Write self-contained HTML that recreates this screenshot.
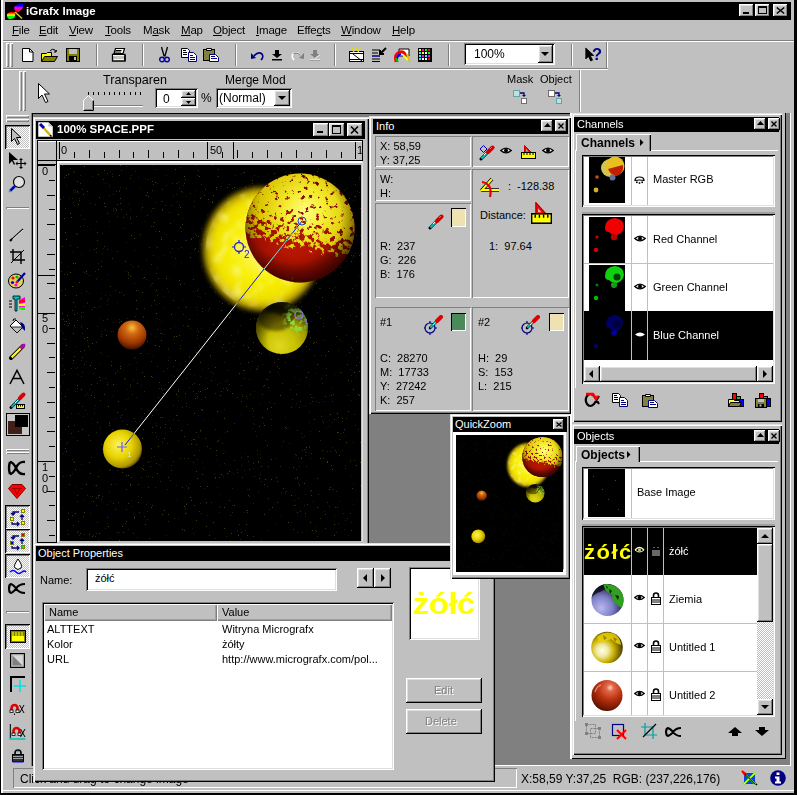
<!DOCTYPE html>
<html><head><meta charset="utf-8">
<style>
*{box-sizing:border-box;margin:0;padding:0}
html,body{width:797px;height:795px;overflow:hidden}
body{position:relative;background:#c0c0c0;font-family:"Liberation Sans",sans-serif;font-size:11px;color:#000}
.a{position:absolute}
.t{position:absolute;white-space:nowrap;line-height:1}
.btn{background:#c0c0c0;box-shadow:inset -1px -1px #000,inset 1px 1px #fff,inset -2px -2px #808080,inset 2px 2px #dfdfdf}
.sunk{box-shadow:inset 1px 1px #808080,inset -1px -1px #fff,inset 2px 2px #000,inset -2px -2px #dfdfdf}
.win{background:#c0c0c0;box-shadow:inset -1px -1px #000,inset 1px 1px #dfdfdf,inset -2px -2px #808080,inset 2px 2px #fff}
.tb{background:#000;color:#fff}
.cap{position:absolute;width:16px;height:14px;background:#c0c0c0;box-shadow:inset -1px -1px #000,inset 1px 1px #fff,inset -2px -2px #808080,inset 2px 2px #dfdfdf}
.etch{box-shadow:inset 1px 1px #808080,inset -1px -1px #fff}
.raise1{box-shadow:inset 1px 1px #fff,inset -1px -1px #808080}
.sep{position:absolute;width:2px;box-shadow:inset 1px 0 #808080,inset -1px 0 #fff}
.grip{position:absolute;width:3px;box-shadow:inset 1px 1px #fff,inset -1px -1px #808080}
svg{position:absolute;overflow:visible}
u{text-decoration:underline;text-underline-offset:1px}
</style></head><body>

<svg width="0" height="0" style="position:absolute">
<defs>
<symbol id="eye" viewBox="0 0 12 7"><path d="M0.8 3.5Q6 -1.2 11.2 3.5Q6 8.2 0.8 3.5z" fill="#f4f4d8" stroke="#000" stroke-width="1.3"/><circle cx="6" cy="3.5" r="2" fill="#000"/></symbol>
<symbol id="drop" viewBox="0 0 16 16"><path d="M2 14L10 6" stroke="#000" stroke-width="3" stroke-linecap="round"/><path d="M2.5 13.5L9.5 6.5" stroke="#00c0c0" stroke-width="2"/><path d="M5 10L8 7" stroke="#fff" stroke-width="1"/><path d="M9 7L13.5 2.5" stroke="#d00000" stroke-width="4" stroke-linecap="round"/><path d="M11 4L13 2" stroke="#ff6060" stroke-width="1"/></symbol>
<symbol id="ruler" viewBox="0 0 15 14"><path d="M3.5 0.5L3.5 7.5L10.5 7.5z" fill="#ff0000" stroke="#c00000"/><path d="M5 4L5 6.5L7.5 6.5z" fill="#c0c0c0"/><rect x="0.5" y="7.5" width="14" height="6" fill="#ffff00" stroke="#000"/><path d="M3 8v2M6 8v2M9 8v2M12 8v2" stroke="#000"/></symbol>
<symbol id="tgt" viewBox="0 0 20 20"><circle cx="6" cy="13" r="5" fill="none" stroke="#000080" stroke-width="1.2"/><path d="M6 6v2.5M6 17.5v2.5M-1 13h2.5M10.5 13h2.5" stroke="#000080" stroke-width="1.2"/><path d="M6 13L14 5" stroke="#000" stroke-width="2.6" stroke-linecap="round"/><path d="M6.3 12.7L13.5 5.5" stroke="#00c8c8" stroke-width="1.8"/><path d="M9 10L12 7" stroke="#fff" stroke-width="0.8"/><path d="M13 6L17 2" stroke="#e00000" stroke-width="4" stroke-linecap="round"/></symbol>
<symbol id="lock" viewBox="0 0 10 13"><path d="M2.5 6V3.5a2.5 2.5 0 0 1 5 0V6" fill="none" stroke="#000" stroke-width="1.6"/><rect x="0.5" y="5.5" width="9" height="7" fill="#fff" stroke="#000"/><path d="M1 8h8M1 10h8" stroke="#000"/></symbol>
<symbol id="copy" viewBox="0 0 16 14"><path d="M0.5 0.5h6l2 2v7h-8z" fill="#fff" stroke="#000"/><path d="M2 2.5h3M2 4.5h4M2 6.5h4" stroke="#000"/><path d="M7.5 4.5h5l3 3v6h-8z" fill="#fff" stroke="#000080"/><path d="M9 7.5h3M9 9.5h5M9 11.5h5" stroke="#000080"/></symbol>
<symbol id="paste" viewBox="0 0 16 15"><rect x="0.5" y="2.5" width="11" height="11" fill="#808040" stroke="#000"/><path d="M3.5 3.5V1.5h5v2z" fill="#ffff80" stroke="#000"/><path d="M6.5 7.5h6l3 3v4h-9z" fill="#fff" stroke="#000080"/><path d="M8 9.5h4M8 11.5h6" stroke="#000080"/></symbol>
<symbol id="sph" viewBox="0 0 30 30"><circle cx="15" cy="15" r="14.5"/></symbol>
<radialGradient id="earth" cx="0.35" cy="0.7" r="0.8"><stop offset="0" stop-color="#b0b0f0"/><stop offset="0.5" stop-color="#7070b8"/><stop offset="1" stop-color="#202040"/></radialGradient>
<radialGradient id="unt1" cx="0.4" cy="0.55" r="0.7"><stop offset="0" stop-color="#f8f8f0"/><stop offset="0.45" stop-color="#e0d040"/><stop offset="0.8" stop-color="#a09000"/><stop offset="1" stop-color="#504000"/></radialGradient>
<radialGradient id="unt2" cx="0.4" cy="0.35" r="0.75"><stop offset="0" stop-color="#ffc0a0"/><stop offset="0.3" stop-color="#e06040"/><stop offset="0.75" stop-color="#a02810"/><stop offset="1" stop-color="#501000"/></radialGradient>
</defs></svg>
<!-- main frame -->
<div class="a" style="left:0;top:0;width:1px;height:795px;background:#000"></div>
<div class="a" style="left:1px;top:0;width:2px;height:795px;background:#fff"></div>
<div class="a" style="left:794px;top:0;width:3px;height:795px;background:#000"></div>

<!-- title bar -->
<div class="a tb" style="left:5px;top:2px;width:786px;height:18px"></div>
<svg style="left:5px;top:2px" width="20" height="18" viewBox="0 0 20 18"><defs><linearGradient id="lg1" x1="0" y1="0" x2="0" y2="1"><stop offset="0.1" stop-color="#ff0000"/><stop offset="0.45" stop-color="#ffff00"/><stop offset="0.65" stop-color="#00ff00"/></linearGradient><linearGradient id="lg2" x1="0" y1="0" x2="0" y2="1"><stop offset="0.25" stop-color="#0000ff"/><stop offset="0.5" stop-color="#ff00ff"/><stop offset="0.9" stop-color="#ff0000"/></linearGradient></defs><path d="M9 5Q12 1 18 1.5Q19 6 15 9Q13 11 11.5 10Q9 8 9 5z" fill="url(#lg2)"/><path d="M2 12Q5 9 9.5 10Q11 12 10 15Q8 17.5 4 17Q1.5 16 2 12z" fill="url(#lg1)"/><path d="M10 10L17 16.5" stroke="#e0d000" stroke-width="1.4"/></svg>
<div class="t" style="left:26px;top:6px;color:#fff;font-weight:bold;font-size:11.5px">iGrafx Image</div>
<div class="cap" style="left:739px;top:4px;width:15px;height:13px"></div>
<div class="cap" style="left:755px;top:4px;width:15px;height:13px"></div>
<div class="cap" style="left:773px;top:4px;width:15px;height:13px"></div>
<div class="a" style="left:743px;top:12px;width:6px;height:2px;background:#000"></div>
<div class="a" style="left:758px;top:6px;width:9px;height:8px;border:1px solid #000;border-top-width:2px"></div>
<svg style="left:776px;top:7px" width="9" height="7" viewBox="0 0 9 7"><path d="M0.8 0.5L8.2 6.5M8.2 0.5L0.8 6.5" stroke="#000" stroke-width="1.6"/></svg>

<!-- menu -->
<div class="t" style="left:12px;top:25px;font-size:11.5px;letter-spacing:-0.2px"><u>F</u>ile</div>
<div class="t" style="left:39px;top:25px;font-size:11.5px;letter-spacing:-0.2px"><u>E</u>dit</div>
<div class="t" style="left:69px;top:25px;font-size:11.5px;letter-spacing:-0.2px"><u>V</u>iew</div>
<div class="t" style="left:105px;top:25px;font-size:11.5px;letter-spacing:-0.2px"><u>T</u>ools</div>
<div class="t" style="left:143px;top:25px;font-size:11.5px;letter-spacing:-0.2px">M<u>a</u>sk</div>
<div class="t" style="left:181px;top:25px;font-size:11.5px;letter-spacing:-0.2px"><u>M</u>ap</div>
<div class="t" style="left:213px;top:25px;font-size:11.5px;letter-spacing:-0.2px"><u>O</u>bject</div>
<div class="t" style="left:256px;top:25px;font-size:11.5px;letter-spacing:-0.2px"><u>I</u>mage</div>
<div class="t" style="left:297px;top:25px;font-size:11.5px;letter-spacing:-0.2px">Effe<u>c</u>ts</div>
<div class="t" style="left:341px;top:25px;font-size:11.5px;letter-spacing:-0.2px"><u>W</u>indow</div>
<div class="t" style="left:392px;top:25px;font-size:11.5px;letter-spacing:-0.2px"><u>H</u>elp</div>

<!-- rebar lines -->
<div class="a" style="left:3px;top:40px;width:791px;height:1px;background:#808080"></div>
<div class="a" style="left:3px;top:41px;width:791px;height:1px;background:#fff"></div>
<div class="a" style="left:3px;top:68px;width:605px;height:1px;background:#808080"></div>
<div class="a" style="left:3px;top:69px;width:605px;height:1px;background:#fff"></div>


<!-- ===== TOOLBAR 1 ===== -->
<div class="a" style="left:6px;top:43px;width:3px;height:24px;box-shadow:inset 1px 1px #fff,inset -1px -1px #808080"></div>
<div class="a" style="left:10px;top:43px;width:3px;height:24px;box-shadow:inset 1px 1px #fff,inset -1px -1px #808080"></div>
<div class="sep" style="left:96px;top:44px;height:22px"></div>
<div class="sep" style="left:142px;top:44px;height:22px"></div>
<div class="sep" style="left:235px;top:44px;height:22px"></div>
<div class="sep" style="left:334px;top:44px;height:22px"></div>
<div class="sep" style="left:448px;top:44px;height:22px"></div>
<div class="sep" style="left:571px;top:44px;height:22px"></div>
<div class="a" style="left:606px;top:42px;width:1px;height:26px;background:#808080"></div>
<div class="a" style="left:607px;top:42px;width:1px;height:26px;background:#fff"></div>
<!-- new -->
<svg style="left:22px;top:48px" width="12" height="14" viewBox="0 0 12 14"><path d="M0.5 0.5h7l3.5 3.5v9.5h-10.5z" fill="#fff" stroke="#000"/><path d="M7.5 0.5v3.5h3.5" fill="none" stroke="#000"/></svg>
<!-- open -->
<svg style="left:41px;top:48px" width="17" height="14" viewBox="0 0 17 14"><path d="M9 3Q11 0 14 2L15 4M15 4L13 4M15 4L15.5 2" fill="none" stroke="#000" stroke-width="1"/><path d="M0.5 5.5h5l1 -1h4v9h-10z" fill="#ffff00" stroke="#000"/><path d="M3.5 8.5h13l-3 5h-13z" fill="#808000" stroke="#000"/></svg>
<!-- save -->
<svg style="left:66px;top:48px" width="14" height="14" viewBox="0 0 14 14"><rect x="0.5" y="0.5" width="13" height="13" fill="#808000" stroke="#000"/><rect x="3" y="1" width="8" height="5" fill="#c0c0c0"/><rect x="3" y="8" width="8" height="5" fill="#000"/><rect x="8" y="9" width="2" height="3" fill="#c0c0c0"/></svg>
<!-- print -->
<svg style="left:111px;top:47px" width="16" height="15" viewBox="0 0 16 15"><path d="M4.5 1.5h9l-1.5 5h-9z" fill="#fff" stroke="#000" stroke-width="1.2"/><path d="M4.5 3.5h6M4 5h6" stroke="#000"/><path d="M1.5 7.5h12.5v6.5h-12.5z" fill="#c0c0c0" stroke="#000" stroke-width="1.3"/><path d="M2 8.6h11.5" stroke="#fff"/><path d="M6 10.5h4" stroke="#d0f000" stroke-width="1.2"/><path d="M2.5 12.6h10.5" stroke="#fff"/><path d="M14 8v6" stroke="#000" stroke-width="1.5"/></svg>
<!-- cut -->
<svg style="left:159px;top:47px" width="11" height="16" viewBox="0 0 11 16"><path d="M2.5 0L5.2 9.5M8.5 0L5.8 9.5" stroke="#000" stroke-width="1.3"/><circle cx="3" cy="12.5" r="2.3" fill="none" stroke="#0000a0" stroke-width="1.4"/><circle cx="8" cy="12.5" r="2.3" fill="none" stroke="#0000a0" stroke-width="1.4"/></svg>
<!-- copy -->
<svg style="left:181px;top:48px" width="16" height="14"><use href="#copy" width="16" height="14"/></svg>
<!-- paste -->
<svg style="left:203px;top:47px" width="16" height="15"><use href="#paste" width="16" height="15"/></svg>
<!-- undo -->
<svg style="left:251px;top:51px" width="14" height="10" viewBox="0 0 14 10"><path d="M3 5Q7 0 11 3Q13 6 10 9" fill="none" stroke="#000080" stroke-width="1.6"/><path d="M0 2L5 7L0 8z" fill="#000080"/></svg>
<svg style="left:272px;top:50px" width="10" height="10" viewBox="0 0 10 10"><path d="M3 0h4v4h3l-5 4l-5 -4h3z" fill="#000"/><rect x="0" y="9" width="10" height="1.5" fill="#000"/></svg>
<svg style="left:290px;top:51px" width="14" height="10" viewBox="0 0 14 10"><path d="M11 5Q7 0 3 3Q1 6 4 9" fill="none" stroke="#fff" stroke-width="1.6"/><path d="M10.5 4.5Q7 0.5 3.5 3" fill="none" stroke="#808080" stroke-width="1.2"/><path d="M14 2L9 7L14 8z" fill="#808080"/></svg>
<svg style="left:310px;top:50px" width="10" height="10" viewBox="0 0 10 10"><path d="M3 0h4v4h3l-5 4l-5 -4h3z" fill="#808080"/><rect x="0" y="9" width="10" height="1.5" fill="#808080"/><path d="M10 4.5L5 8.5M0 9.5h10" stroke="#fff" stroke-width="0.8"/></svg>
<!-- icons A-D -->
<svg style="left:349px;top:48px" width="16" height="14" viewBox="0 0 16 14"><rect x="0.5" y="3.5" width="14" height="10" fill="#fff" stroke="#000"/><path d="M0.5 5.5h14M0.5 11.5h14" stroke="#000"/><path d="M2 4v1M5 4v1M8 4v1M11 4v1M2 12v1M5 12v1M8 12v1M11 12v1" stroke="#fff"/><path d="M4 6L13 13" stroke="#000"/><path d="M3 0L5 4M11 0L9 4M7 0v3" stroke="#e0e000" stroke-width="1.5"/></svg>
<svg style="left:372px;top:48px" width="15" height="14" viewBox="0 0 15 14"><path d="M0 2h8M0 5h6M0 8h8M0 11h8M0 13.5h8" stroke="#000"/><path d="M0 8h8" stroke="#0000c0"/><path d="M14 0L8 6M8 2v4h4" fill="none" stroke="#000" stroke-width="2"/></svg>
<svg style="left:394px;top:48px" width="17" height="15" viewBox="0 0 17 15"><path d="M5 1h10v7h-10z" fill="#fff" stroke="#000"/><path d="M2 14Q0 6 6 4Q10 3 12 8" fill="none" stroke="#ff0000" stroke-width="3"/><path d="M3 12Q3 7 7 6" fill="none" stroke="#0000ff" stroke-width="2"/><path d="M9 7L14 12" stroke="#ffff00" stroke-width="2"/><path d="M13 6L16 14" stroke="#e0c000" stroke-width="2"/><path d="M2 10l2 4" stroke="#00c000" stroke-width="2"/></svg>
<svg style="left:418px;top:48px" width="14" height="14" viewBox="0 0 14 14"><rect width="14" height="14" fill="#000"/><rect x="1" y="1" width="2" height="2" fill="#ffff00"/><rect x="4" y="1" width="2" height="2" fill="#ff00ff"/><rect x="7" y="1" width="2" height="2" fill="#00ff00"/><rect x="10" y="1" width="2" height="2" fill="#ff0000"/><rect x="1" y="4" width="2" height="2" fill="#00ffff"/><rect x="4" y="4" width="2" height="2" fill="#ffff00"/><rect x="7" y="4" width="2" height="2" fill="#ffffff"/><rect x="10" y="4" width="2" height="2" fill="#00ff00"/><rect x="1" y="7" width="2" height="2" fill="#00ffff"/><rect x="4" y="7" width="2" height="2" fill="#ff00ff"/><rect x="7" y="7" width="2" height="2" fill="#00ffff"/><rect x="10" y="7" width="2" height="2" fill="#ff00ff"/><rect x="1" y="10" width="2" height="2" fill="#00ffff"/><rect x="4" y="10" width="2" height="2" fill="#ffffff"/><rect x="7" y="10" width="2" height="2" fill="#ffffff"/><rect x="10" y="10" width="2" height="2" fill="#ff0000"/></svg>
<!-- zoom combo -->
<div class="a" style="left:464px;top:43px;width:91px;height:22px;background:#fff;box-shadow:inset 1px 1px #808080,inset -1px -1px #fff,inset 2px 2px #000,inset -2px -2px #dfdfdf"></div>
<div class="btn a" style="left:538px;top:45px;width:15px;height:18px"></div>
<svg style="left:541px;top:52px" width="8" height="4"><path d="M0 0h8L4 4z" fill="#000"/></svg>
<div class="t" style="left:474px;top:48px;font-size:12px">100%</div>
<!-- help -->
<svg style="left:585px;top:47px" width="19" height="16" viewBox="0 0 19 16"><path d="M0.8 1v11l2.6 -2.6l2.4 4.6l1.8 -0.9l-2.4 -4.6h3.6z" fill="#000" stroke="#000" stroke-width="0.8"/><text x="7" y="12.8" font-family="Liberation Sans" font-weight="bold" font-size="16.5" fill="#000080">?</text></svg>

<!-- ===== TOOLBAR 2 ===== -->
<div class="a" style="left:19px;top:71px;width:3px;height:40px;box-shadow:inset 1px 1px #fff,inset -1px -1px #808080"></div>
<div class="a" style="left:23px;top:71px;width:3px;height:40px;box-shadow:inset 1px 1px #fff,inset -1px -1px #808080"></div>
<div class="a" style="left:579px;top:70px;width:1px;height:42px;background:#808080"></div>
<div class="a" style="left:580px;top:70px;width:1px;height:42px;background:#fff"></div>
<svg style="left:38px;top:83px" width="13" height="21" viewBox="0 0 13 21"><path d="M0.5 0.5v15l3.5 -3.5l3.5 7.5l2.5 -1l-3.5 -7.5h5z" fill="#fff" stroke="#000"/></svg>
<div class="t" style="left:103px;top:74px;font-size:12.6px">Transparen</div>
<div class="t" style="left:225px;top:74px;font-size:12px">Merge Mod</div>
<div class="a" style="left:88px;top:92px;width:53px;height:3px;background:repeating-linear-gradient(90deg,#000 0 1px,transparent 1px 5.2px)"></div>
<div class="a" style="left:88px;top:105px;width:55px;height:2px;box-shadow:inset 1px 1px #808080,inset -1px -1px #fff;background:#c0c0c0"></div>
<svg style="left:83px;top:95px" width="11" height="16" viewBox="0 0 11 16"><path d="M0.5 15.5V5.5L5.5 0.5L10.5 5.5V15.5z" fill="#c0c0c0" stroke="#fff"/><path d="M10.5 5.5V15.5H0.5" fill="none" stroke="#000"/><path d="M9.5 6V14.5H1.5" fill="none" stroke="#808080"/></svg>
<div class="a" style="left:155px;top:88px;width:43px;height:20px;background:#fff;box-shadow:inset 1px 1px #808080,inset -1px -1px #fff,inset 2px 2px #000,inset -2px -2px #dfdfdf"></div>
<div class="t" style="left:163px;top:93px;font-size:12px">0</div>
<div class="btn a" style="left:181px;top:90px;width:15px;height:8px"></div>
<div class="btn a" style="left:181px;top:98px;width:15px;height:8px"></div>
<svg style="left:186px;top:92px" width="5" height="3"><path d="M0 3h5L2.5 0z" fill="#000"/></svg>
<svg style="left:186px;top:101px" width="5" height="3"><path d="M0 0h5L2.5 3z" fill="#000"/></svg>
<div class="t" style="left:201px;top:92px;font-size:12px">%</div>
<div class="a" style="left:216px;top:88px;width:76px;height:20px;background:#fff;box-shadow:inset 1px 1px #808080,inset -1px -1px #fff,inset 2px 2px #000,inset -2px -2px #dfdfdf"></div>
<div class="btn a" style="left:274px;top:90px;width:16px;height:16px"></div>
<svg style="left:278px;top:96px" width="8" height="4"><path d="M0 0h8L4 4z" fill="#000"/></svg>
<div class="t" style="left:219px;top:92px;font-size:12px">(Normal)</div>
<div class="t" style="left:507px;top:74px;font-size:11px">Mask</div>
<div class="t" style="left:540px;top:74px;font-size:11px">Object</div>
<svg style="left:513px;top:90px" width="15" height="14" viewBox="0 0 15 14"><rect x="0.5" y="0.5" width="6" height="6" fill="#c0e0e0" stroke="#008080" stroke-dasharray="1 1"/><path d="M7 3h4v3" fill="none" stroke="#000080" stroke-width="1.3"/><path d="M9 5l2 2l2 -2z" fill="#000080"/><rect x="8.5" y="8.5" width="5" height="5" fill="#fff" stroke="#000" stroke-dasharray="1 1"/></svg>
<svg style="left:548px;top:90px" width="15" height="14" viewBox="0 0 15 14"><rect x="0.5" y="0.5" width="6" height="6" fill="#fff" stroke="#000" stroke-dasharray="1 1"/><path d="M7 3h4v3" fill="none" stroke="#000080" stroke-width="1.3"/><path d="M9 5l2 2l2 -2z" fill="#000080"/><rect x="8.5" y="8.5" width="5" height="5" fill="#c0e0e0" stroke="#008080" stroke-dasharray="1 1"/></svg>


<!-- ===== TOOL PALETTE ===== -->
<div class="a" style="left:4px;top:113px;width:28px;height:653px;background:#c0c0c0;box-shadow:inset -1px 0 #808080"></div>
<div class="a" style="left:6px;top:115px;width:23px;height:3px;box-shadow:inset 1px 1px #fff,inset -1px -1px #808080"></div>
<div class="a" style="left:6px;top:119px;width:23px;height:3px;box-shadow:inset 1px 1px #fff,inset -1px -1px #808080"></div>
<div class="a" style="left:5px;top:125px;width:25px;height:24px;background:repeating-conic-gradient(#fff 0 25%,#c0c0c0 0 50%) 0 0/2px 2px;box-shadow:inset 1px 1px #000,inset -1px -1px #fff,inset 2px 2px #808080"></div>
<svg style="left:11px;top:128px" width="13" height="18" viewBox="0 0 13 18"><path d="M0.5 0.5v13l3 -3l3 6l2 -1l-3 -6h4.5z" fill="#c0c0c0" stroke="#000"/></svg>
<svg style="left:9px;top:152px" width="17" height="17" viewBox="0 0 17 17"><path d="M0 0v12l3 -3l2 4l1 -1l-2 -4h5z" fill="#000"/><path d="M12 7v9M7.5 11.5h9" stroke="#000" stroke-width="1.2"/><path d="M12 6l-2 2h4zM12 17l-2 -2h4zM6.5 11.5l2 -2v4zM17.5 11.5l-2 -2v4z" fill="#000"/></svg>
<svg style="left:8px;top:175px" width="18" height="18" viewBox="0 0 18 18"><circle cx="11" cy="7" r="5.5" fill="#e0e0e0" stroke="#000" stroke-width="1.2"/><path d="M7 11L2 16" stroke="#0000c0" stroke-width="2.5"/><path d="M2.5 15.5L1 17" stroke="#00c0c0" stroke-width="2"/></svg>
<div class="a" style="left:6px;top:207px;width:23px;height:2px;box-shadow:inset 1px 1px #808080,inset -1px -1px #fff"></div>
<svg style="left:9px;top:226px" width="16" height="16" viewBox="0 0 16 16"><path d="M2 14L14 3" stroke="#000" stroke-width="1.2"/><path d="M3 14L14 4" stroke="#fff" stroke-width="0.8"/><path d="M1 15l2 -2" stroke="#000" stroke-width="2"/></svg>
<svg style="left:10px;top:249px" width="15" height="15" viewBox="0 0 15 15"><path d="M3 0v11h12M0 3h11v12" fill="none" stroke="#000" stroke-width="1.4"/><path d="M1 14L14 1" stroke="#000" stroke-width="1"/></svg>
<svg style="left:8px;top:272px" width="18" height="17" viewBox="0 0 18 17"><ellipse cx="8" cy="9" rx="7.5" ry="7" fill="#e0d060" stroke="#000"/><circle cx="5" cy="6" r="1.6" fill="#ff0000"/><circle cx="9" cy="5" r="1.6" fill="#00c000"/><circle cx="4.5" cy="10.5" r="1.6" fill="#0000ff"/><circle cx="8" cy="13" r="1.6" fill="#ff00ff"/><path d="M17 1L9 10" stroke="#0000a0" stroke-width="2.2"/><path d="M10 9L8 11" stroke="#ff0000" stroke-width="2"/></svg>
<svg style="left:9px;top:295px" width="17" height="17" viewBox="0 0 17 17"><path d="M4 1h7v3h-3v12h-2v-12h-2z" fill="#00c0c0" stroke="#000" stroke-width="0.8"/><path d="M10 5l6 -3v13l-6 -1z" fill="#ff00ff"/><path d="M10 6l6 -2v3l-6 1z" fill="#ff0000"/><path d="M10 9l6 -1v3l-6 0z" fill="#ffff00"/><path d="M10 12l6 0v3l-6 -1z" fill="#00ff00"/><path d="M0 6h3M0 9h3M0 12h3" stroke="#000"/></svg>
<svg style="left:9px;top:318px" width="17" height="17" viewBox="0 0 17 17"><path d="M1 8l6 -6l7 7l-6 6z" fill="#fff" stroke="#000"/><path d="M2 9l6 6l6 -6z" fill="#c0c0c0" stroke="#000" stroke-width="0.8"/><path d="M4 3Q4 0 7 1" fill="none" stroke="#000"/><path d="M11 4Q17 5 16 13l-3 -3z" fill="#000080"/></svg>
<svg style="left:9px;top:343px" width="17" height="17" viewBox="0 0 17 17"><path d="M2 15L14 3" stroke="#000" stroke-width="4" stroke-linecap="round"/><path d="M2.5 14.5L13.5 3.5" stroke="#ffff00" stroke-width="2.4"/><path d="M12.5 4.5L15 2" stroke="#c000c0" stroke-width="3" stroke-linecap="round"/><path d="M1 16l1.5 -1.5" stroke="#000" stroke-width="1.5"/></svg>
<svg style="left:9px;top:369px" width="16" height="16" viewBox="0 0 16 16"><path d="M1 15L8 1.5L15 15M4.2 9.5h7.6" fill="none" stroke="#000" stroke-width="1.5"/></svg>
<svg style="left:8px;top:392px" width="18" height="18" viewBox="0 0 18 18"><path d="M3 15.5L12 6.5" stroke="#000" stroke-width="3" stroke-linecap="round"/><path d="M3.5 15L11.5 7" stroke="#00b0b0" stroke-width="1.8"/><path d="M7 11L10 8" stroke="#fff" stroke-width="1"/><path d="M12 6L15.5 2.5" stroke="#e00000" stroke-width="4" stroke-linecap="round"/><rect x="8.5" y="12.5" width="8" height="4" fill="#ffff00" stroke="#000"/><path d="M10.5 13v1.5M12.5 13v1.5M14.5 13v1.5" stroke="#000"/></svg>
<div class="a" style="left:6px;top:413px;width:24px;height:23px;background:#c8c8c8;border:1px solid #000"></div>
<div class="a" style="left:8px;top:421px;width:14px;height:13px;background:#402018"></div>
<div class="a" style="left:15px;top:415px;width:13px;height:12px;background:#000"></div>
<div class="a" style="left:6px;top:449px;width:23px;height:2px;box-shadow:inset 1px 1px #fff,inset -1px -1px #808080"></div>
<div class="a" style="left:6px;top:452px;width:23px;height:2px;box-shadow:inset 1px 1px #fff,inset -1px -1px #808080"></div>
<svg style="left:9px;top:461px" width="17" height="14" viewBox="0 0 17 14"><path d="M16 1Q10 0 7 7Q4 13 1 13M16 13Q10 14 7 7Q4 1 1 1M1 1Q-1 7 1 13" fill="none" stroke="#000" stroke-width="2.4"/></svg>
<svg style="left:8px;top:484px" width="18" height="15" viewBox="0 0 18 15"><path d="M4 0.5h10l3.5 4l-8.5 10l-8.5 -10z" fill="#ff0000" stroke="#800000"/><path d="M4 4.5h10M6 4.5l3 6l3 -6" fill="none" stroke="#a00000"/></svg>
<div class="a" style="left:5px;top:505px;width:25px;height:24px;background:repeating-conic-gradient(#fff 0 25%,#c0c0c0 0 50%) 0 0/2px 2px;box-shadow:inset 1px 1px #000,inset -1px -1px #fff,inset 2px 2px #808080"></div>
<svg style="left:9px;top:508px" width="18" height="18" viewBox="0 0 18 18"><rect x="12.5" y="1.5" width="3" height="3" fill="#ffff00" stroke="#808000"/><rect x="1.5" y="9.5" width="3" height="3" fill="#ffff00" stroke="#808000"/><rect x="12.5" y="13.5" width="3" height="3" fill="#ffff00" stroke="#808000"/><path d="M10 4H4V7M2 5l2 2l2 -2" fill="none" stroke="#000080" stroke-width="1.3"/><path d="M13 8v4M11 9l2 -2l2 2" fill="none" stroke="#000080" stroke-width="1.3"/><path d="M3 14v2h7M8 14l2 2l-2 2" fill="none" stroke="#000080" stroke-width="1.3"/></svg>
<div class="a" style="left:5px;top:529px;width:25px;height:24px;background:repeating-conic-gradient(#fff 0 25%,#c0c0c0 0 50%) 0 0/2px 2px;box-shadow:inset 1px 1px #000,inset -1px -1px #fff,inset 2px 2px #808080"></div>
<svg style="left:9px;top:532px" width="18" height="18" viewBox="0 0 18 18"><rect x="12.5" y="1.5" width="3" height="3" fill="#ff0000" stroke="#808000"/><rect x="1.5" y="9.5" width="3" height="3" fill="#0000ff" stroke="#808000"/><rect x="12.5" y="13.5" width="3" height="3" fill="#00ff00" stroke="#808000"/><path d="M10 4H4V7M2 5l2 2l2 -2" fill="none" stroke="#000080" stroke-width="1.3"/><path d="M13 8v4M11 9l2 -2l2 2" fill="none" stroke="#000080" stroke-width="1.3"/><path d="M3 14v2h7M8 14l2 2l-2 2" fill="none" stroke="#000080" stroke-width="1.3"/></svg>
<div class="a" style="left:5px;top:554px;width:25px;height:24px;background:repeating-conic-gradient(#fff 0 25%,#c0c0c0 0 50%) 0 0/2px 2px;box-shadow:inset 1px 1px #000,inset -1px -1px #fff,inset 2px 2px #808080"></div>
<svg style="left:9px;top:557px" width="18" height="18" viewBox="0 0 18 18"><path d="M9 2Q4 9 6 11Q9 14 12 11Q14 9 9 2z" fill="#fff" stroke="#000"/><path d="M1 15Q4 12 7 15Q10 18 13 15Q15 13 17 15" fill="none" stroke="#0000ff" stroke-width="1.5"/></svg>
<svg style="left:9px;top:583px" width="17" height="11" viewBox="0 0 17 11"><path d="M16 1Q10 1 7 5.5Q4 10 1 10M16 10Q10 10 7 5.5Q4 1 1 1M1 1Q-1 5.5 1 10" fill="none" stroke="#000" stroke-width="2.2"/></svg>
<div class="a" style="left:6px;top:611px;width:23px;height:2px;box-shadow:inset 1px 1px #808080,inset -1px -1px #fff"></div>
<div class="a" style="left:5px;top:624px;width:25px;height:25px;background:repeating-conic-gradient(#fff 0 25%,#c0c0c0 0 50%) 0 0/2px 2px;box-shadow:inset 1px 1px #000,inset -1px -1px #fff,inset 2px 2px #808080"></div>
<svg style="left:10px;top:630px" width="16" height="13" viewBox="0 0 16 13"><rect x="0.5" y="0.5" width="15" height="12" fill="#808000" stroke="#000"/><rect x="2" y="6" width="12" height="5" fill="#ffff00"/><path d="M3 2v4M6 2v4M9 2v4M12 2v4" stroke="#ffff00"/></svg>
<svg style="left:10px;top:653px" width="15" height="15" viewBox="0 0 15 15"><rect x="0.5" y="0.5" width="14" height="14" fill="#808080" stroke="#000"/><path d="M2 2h11v11z" fill="#fff" opacity="0.7"/><rect x="2" y="2" width="11" height="11" fill="none" stroke="#c0c0c0"/></svg>
<svg style="left:10px;top:676px" width="16" height="16" viewBox="0 0 16 16"><path d="M1 16V1h14" fill="none" stroke="#000" stroke-width="2"/><path d="M4 10h12M10 4v12" stroke="#00e0e0" stroke-width="1.5"/></svg>
<svg style="left:9px;top:703px" width="16" height="12" viewBox="0 0 16 12"><path d="M2.5 8V5a3 3 0 0 1 6 0v3" fill="none" stroke="#e00000" stroke-width="2.6"/><rect x="1" y="7" width="3" height="2.5" fill="#fff" stroke="#000" stroke-width="0.8"/><rect x="7" y="7" width="3" height="2.5" fill="#fff" stroke="#000" stroke-width="0.8"/><path d="M5.5 10.5v1.5" stroke="#000"/><path d="M10.5 2l4.5 8M15 2l-4.5 8" stroke="#000" stroke-width="1"/></svg>
<svg style="left:9px;top:724px" width="17" height="16" viewBox="0 0 17 16"><path d="M4.5 10V7a3 3 0 0 1 6 0v3" fill="none" stroke="#e00000" stroke-width="2.6"/><rect x="3" y="9" width="3" height="2.5" fill="#fff" stroke="#000" stroke-width="0.8"/><rect x="9" y="9" width="3" height="2.5" fill="#fff" stroke="#000" stroke-width="0.8"/><path d="M11.5 5l4.5 8M16 5l-4.5 8" stroke="#000" stroke-width="1"/><path d="M1 0v15h15.5" fill="none" stroke="#00c0c0" stroke-width="1.3"/><path d="M1.5 0v14" stroke="#000" stroke-width="0.8"/></svg>
<svg style="left:12px;top:749px" width="12" height="14" viewBox="0 0 12 14"><path d="M3 6V4a3 3 0 0 1 6 0v2" fill="none" stroke="#000" stroke-width="1.6"/><path d="M4 2.5h4" stroke="#00c0c0" stroke-width="1.2"/><rect x="0.5" y="5.5" width="11" height="7" fill="#303030" stroke="#000"/><path d="M1 7.5h10M1 9.5h10" stroke="#a0a0a0"/><path d="M0.5 12.8h11" stroke="#0000ff" stroke-width="1.4"/></svg>

<!-- workspace -->
<div class="a" style="left:32px;top:113px;width:539px;height:653px;background:#808080;box-shadow:inset 1px 1px #000,inset -1px -1px #fff"></div>


<!-- status bar -->
<div class="a" style="left:3px;top:766px;width:791px;height:29px;background:#c0c0c0"></div>
<div class="a" style="left:13px;top:768px;width:504px;height:20px;box-shadow:inset 1px 1px #808080,inset -1px -1px #fff"></div>
<div class="t" style="left:20px;top:773px;font-size:12px">Click and drag to change image</div>
<div class="t" style="left:521px;top:773px;font-size:12px">X:58,59 Y:37,25&nbsp; RGB: (237,226,176)</div>
<svg style="left:742px;top:771px" width="16" height="15" viewBox="0 0 16 15"><rect x="2" y="2" width="11" height="11" fill="#0040ff"/><path d="M2 2L13 13M13 2L2 13" stroke="#00d000" stroke-width="2"/><path d="M2 13L13 2" stroke="#ffff00" stroke-width="1.5"/><path d="M0 0L4 3L3 4z" fill="#ff0000" stroke="#ff0000" stroke-width="2"/><path d="M3 3L15 14" stroke="#000" stroke-width="1.4"/><path d="M4 3.5L14 13" stroke="#fff" stroke-width="0.6"/></svg>
<svg style="left:770px;top:770px" width="16" height="16" viewBox="0 0 16 16"><circle cx="8" cy="8" r="7.8" fill="#000080"/><rect x="6.5" y="2.5" width="3" height="2.5" fill="#fff"/><path d="M5 6.5h4.5v5h1.5v2h-6v-2h1.5v-3h-1.5z" fill="#fff"/></svg>
<div class="a" style="left:3px;top:790px;width:791px;height:1px;background:#fff"></div>
<div class="a" style="left:0px;top:793px;width:797px;height:2px;background:#000"></div>


<!-- ===== RIGHT DOCK ===== -->
<div class="a" style="left:570px;top:113px;width:224px;height:653px;background:#808080"></div>
<div class="a" style="left:570px;top:113px;width:216px;height:646px;background:#c0c0c0;box-shadow:inset 2px 0 #fff,inset -1px -1px #000"></div>
<div class="a" style="left:570px;top:765px;width:221px;height:1px;background:#fff"></div>
<div class="a" style="left:790px;top:113px;width:1px;height:653px;background:#fff"></div>
<div class="a" style="left:791px;top:113px;width:3px;height:653px;background:#c0c0c0"></div>
<!-- channels panel -->
<div class="a" style="left:572px;top:113px;width:210px;height:309px;background:#c0c0c0;box-shadow:inset 1px 1px #dfdfdf,inset 2px 2px #fff,inset -1px -1px #000,inset -2px -2px #808080"></div>
<div class="a tb" style="left:574px;top:117px;width:205px;height:15px"></div>
<div class="t" style="left:577px;top:119px;color:#fff;font-size:11px">Channels</div>
<div class="cap" style="left:754px;top:118px;width:12px;height:12px"></div>
<svg style="left:757px;top:121px" width="7" height="5"><path d="M3.5 0L7 4H0z" fill="#000"/></svg>
<div class="cap" style="left:768px;top:118px;width:12px;height:12px"></div>
<svg style="left:771px;top:121px" width="6" height="6"><path d="M0.5 0.5L5.5 5.5M5.5 0.5L0.5 5.5" stroke="#000" stroke-width="1.4"/></svg>
<div class="a" style="left:575px;top:150px;width:203px;height:238px;box-shadow:inset 1px 1px #fff"></div>
<div class="a" style="left:576px;top:134px;width:75px;height:17px;background:#c0c0c0;box-shadow:inset 1px 1px #fff,inset -1px 0 #000,inset -2px 0 #808080"></div>
<div class="t" style="left:581px;top:137px;font-size:12px;font-weight:bold">Channels</div>
<svg style="left:640px;top:139px" width="4" height="7"><path d="M0 0v7l3.5-3.5z" fill="#000"/></svg>
<!-- master box -->
<div class="a" style="left:582px;top:155px;width:193px;height:52px;background:#fff;box-shadow:inset 1px 1px #000,inset -1px -1px #fff,inset -2px -2px #dfdfdf,inset 2px 2px #808080"></div>
<div class="a" style="left:631px;top:157px;width:1px;height:48px;background:#c0c0c0"></div>
<div class="a" style="left:647px;top:157px;width:1px;height:48px;background:#c0c0c0"></div>
<div class="t" style="left:653px;top:174px">Master RGB</div>
<!-- channel list -->
<div class="a" style="left:582px;top:212px;width:193px;height:2px;background:#a0a0a0"></div>
<div class="a" style="left:582px;top:214px;width:193px;height:170px;background:#fff;box-shadow:inset 1px 1px #000,inset -1px -1px #fff,inset -2px -2px #dfdfdf,inset 2px 2px #808080"></div>
<div class="a" style="left:584px;top:263px;width:189px;height:1px;background:#c0c0c0"></div>
<div class="a" style="left:584px;top:311px;width:189px;height:49px;background:#000"></div>
<div class="a" style="left:631px;top:216px;width:1px;height:144px;background:#c0c0c0"></div>
<div class="a" style="left:647px;top:216px;width:1px;height:144px;background:#c0c0c0"></div>
<div class="t" style="left:653px;top:234px">Red Channel</div>
<div class="t" style="left:653px;top:282px">Green Channel</div>
<div class="t" style="left:653px;top:330px;color:#fff">Blue Channel</div>
<!-- h scrollbar -->
<div class="a" style="left:584px;top:366px;width:189px;height:16px;background:#c0c0c0"></div>
<div class="btn a" style="left:584px;top:366px;width:16px;height:16px"></div>
<svg style="left:589px;top:370px" width="4" height="8"><path d="M4 0v8L0 4z" fill="#000"/></svg>
<div class="btn a" style="left:600px;top:366px;width:157px;height:16px"></div>
<div class="btn a" style="left:757px;top:366px;width:16px;height:16px"></div>
<svg style="left:763px;top:370px" width="4" height="8"><path d="M0 0v8L4 4z" fill="#000"/></svg>

<!-- objects panel -->
<div class="a" style="left:572px;top:424px;width:210px;height:331px;background:#c0c0c0;box-shadow:inset 1px 1px #dfdfdf,inset 2px 2px #fff,inset -1px -1px #000,inset -2px -2px #808080"></div>
<div class="a tb" style="left:574px;top:429px;width:205px;height:15px"></div>
<div class="t" style="left:577px;top:431px;color:#fff;font-size:11px">Objects</div>
<div class="cap" style="left:754px;top:430px;width:12px;height:12px"></div>
<svg style="left:757px;top:433px" width="7" height="5"><path d="M3.5 0L7 4H0z" fill="#000"/></svg>
<div class="cap" style="left:768px;top:430px;width:12px;height:12px"></div>
<svg style="left:771px;top:433px" width="6" height="6"><path d="M0.5 0.5L5.5 5.5M5.5 0.5L0.5 5.5" stroke="#000" stroke-width="1.4"/></svg>
<div class="a" style="left:575px;top:461px;width:203px;height:260px;box-shadow:inset 1px 1px #fff"></div>
<div class="a" style="left:576px;top:446px;width:64px;height:16px;background:#c0c0c0;box-shadow:inset 1px 1px #fff,inset -1px 0 #000,inset -2px 0 #808080"></div>
<div class="t" style="left:581px;top:449px;font-size:12px;font-weight:bold">Objects</div>
<svg style="left:627px;top:451px" width="4" height="7"><path d="M0 0v7l3.5-3.5z" fill="#000"/></svg>
<div class="a" style="left:582px;top:467px;width:193px;height:53px;background:#fff;box-shadow:inset 1px 1px #000,inset -1px -1px #fff,inset -2px -2px #dfdfdf,inset 2px 2px #808080"></div>
<div class="a" style="left:631px;top:469px;width:1px;height:49px;background:#c0c0c0"></div>
<div class="a" style="left:588px;top:469px;width:37px;height:48px;background:#000"></div>
<div class="t" style="left:637px;top:487px">Base Image</div>
<div class="a" style="left:582px;top:524px;width:193px;height:2px;background:#a0a0a0"></div>
<div class="a" style="left:582px;top:526px;width:193px;height:191px;background:#fff;box-shadow:inset 1px 1px #000,inset -1px -1px #fff,inset -2px -2px #dfdfdf,inset 2px 2px #808080"></div>
<div class="a" style="left:584px;top:528px;width:173px;height:47px;background:#000"></div>
<div class="a" style="left:584px;top:623px;width:173px;height:1px;background:#c0c0c0"></div>
<div class="a" style="left:584px;top:671px;width:173px;height:1px;background:#c0c0c0"></div>
<div class="a" style="left:631px;top:528px;width:1px;height:187px;background:#c0c0c0"></div>
<div class="a" style="left:647px;top:528px;width:1px;height:187px;background:#c0c0c0"></div>
<div class="a" style="left:663px;top:528px;width:1px;height:187px;background:#c0c0c0"></div>
<div class="t" style="left:669px;top:546px;color:#fff">żółć</div>
<div class="t" style="left:669px;top:594px">Ziemia</div>
<div class="t" style="left:669px;top:642px">Untitled 1</div>
<div class="t" style="left:669px;top:690px">Untitled 2</div>
<!-- v scrollbar -->
<div class="a" style="left:757px;top:528px;width:16px;height:187px;background:repeating-conic-gradient(#fff 0 25%,#c0c0c0 0 50%) 0 0/2px 2px"></div>
<div class="btn a" style="left:757px;top:528px;width:16px;height:16px"></div>
<svg style="left:761px;top:534px" width="8" height="4"><path d="M0 4h8L4 0z" fill="#000"/></svg>
<div class="btn a" style="left:757px;top:544px;width:16px;height:78px"></div>
<div class="btn a" style="left:757px;top:699px;width:16px;height:16px"></div>
<svg style="left:761px;top:705px" width="8" height="4"><path d="M0 0h8L4 4z" fill="#000"/></svg>

<svg style="left:589px;top:157px" width="36" height="46" viewBox="0 0 36 46"><rect width="36" height="46" fill="#000"/><circle cx="21" cy="11" r="9" fill="#e8d860" opacity="0.9"/><circle cx="26" cy="9" r="9.5" fill="#e8c020"/><path d="M19 12Q26 10 34 8Q35 16 28 19Q22 19 19 12z" fill="#c02000"/><circle cx="23.5" cy="20.5" r="3" fill="#6070a0"/><circle cx="8" cy="20" r="1.8" fill="#c05020"/><circle cx="7" cy="33" r="2.4" fill="#d0b030"/></svg>
<svg style="left:589px;top:217px" width="36" height="46" viewBox="0 0 36 46"><rect width="36" height="46" fill="#000"/><path d="M16 11Q16 2 26 1Q35 2 35 10Q34 16 28 18Q22 18 20 15Q16 15 16 11z" fill="#f00000"/><circle cx="25" cy="20" r="3.2" fill="#c00000"/><circle cx="8" cy="20" r="1.6" fill="#d00000"/><circle cx="7" cy="33" r="2.2" fill="#e00000"/></svg>
<svg style="left:589px;top:265px" width="36" height="46" viewBox="0 0 36 46"><rect width="36" height="46" fill="#000"/><path d="M16 11Q16 2 26 1Q35 2 35 10Q34 16 28 18Q22 18 20 15Q16 15 16 11z" fill="#10d010"/><circle cx="28" cy="12" r="3.5" fill="#004000"/><circle cx="25" cy="20" r="3" fill="#10a010"/><circle cx="8" cy="20" r="1.5" fill="#008000"/><circle cx="7" cy="33" r="2.2" fill="#00c000"/></svg>
<svg style="left:589px;top:313px" width="36" height="46" viewBox="0 0 36 46"><rect width="36" height="46" fill="#000"/><path d="M17 11Q17 3 26 2Q34 3 34 10Q33 16 28 18Q22 18 20 15Q17 15 17 11z" fill="#0000b0" opacity="0.55"/><circle cx="28" cy="11" r="4" fill="#000040"/><circle cx="25" cy="20" r="2.8" fill="#0000a0"/><circle cx="7" cy="33" r="2" fill="#000080"/></svg>
<svg style="left:634px;top:176px" width="11" height="8" viewBox="0 0 11 8"><path d="M1 4.5Q1 1 5.5 1Q10 1 10 4.5Q5.5 3.5 1 4.5z" fill="#fff" stroke="#000" stroke-width="1.2"/><rect x="2" y="5.5" width="1.6" height="1.6" fill="#000"/><rect x="4.7" y="6.2" width="1.6" height="1.6" fill="#000"/><rect x="7.4" y="5.5" width="1.6" height="1.6" fill="#000"/></svg>
<svg style="left:634px;top:235px" width="12" height="7"><use href="#eye" width="12" height="7"/></svg>
<svg style="left:634px;top:283px" width="12" height="7"><use href="#eye" width="12" height="7"/></svg>
<svg style="left:634px;top:331px" width="12" height="7" viewBox="0 0 12 7"><path d="M1 3.5Q6 -0.5 11 3.5Q6 7.5 1 3.5z" fill="#fff"/></svg>
<!-- channel icons -->
<svg style="left:585px;top:393px" width="17" height="14" viewBox="0 0 17 14"><path d="M9 3Q5 -1 2 3Q-0.5 7 2 11Q5 15 9 11L14 3M9 3L14 11" fill="none" stroke="#000" stroke-width="2.2"/><path d="M1 1L8 1L11 6L13 3" fill="none" stroke="#ff0000" stroke-width="2.5"/></svg>
<svg style="left:612px;top:393px" width="16" height="14"><use href="#copy" width="16" height="14"/></svg>
<svg style="left:642px;top:393px" width="16" height="15"><use href="#paste" width="16" height="15"/></svg>
<svg style="left:728px;top:393px" width="16" height="15" viewBox="0 0 16 15"><rect x="4.5" y="0.5" width="4" height="6" fill="#ff0000" stroke="#000"/><rect x="8.5" y="3.5" width="4" height="3" fill="#00d000" stroke="#000"/><rect x="11.5" y="6.5" width="4" height="7" fill="#0000ff" stroke="#000"/><path d="M0.5 6.5h5l1 1h5v6h-11z" fill="#ffff40" stroke="#000"/><path d="M2.5 9.5h11l-2 4h-11z" fill="#808040" stroke="#000"/></svg>
<svg style="left:755px;top:393px" width="16" height="15" viewBox="0 0 16 15"><rect x="4.5" y="0.5" width="4" height="6" fill="#ff0000" stroke="#000"/><rect x="8.5" y="3.5" width="4" height="3" fill="#00d000" stroke="#000"/><rect x="11.5" y="5.5" width="4" height="8" fill="#0000ff" stroke="#000"/><rect x="0.5" y="5.5" width="11" height="9" fill="#808040" stroke="#000"/><rect x="3" y="6" width="6" height="3" fill="#c0c0c0"/><rect x="3" y="11" width="6" height="3" fill="#000"/><rect x="4.5" y="11.5" width="2" height="2" fill="#c0c0c0"/></svg>
<svg style="left:588px;top:469px" width="37" height="48"><rect width="37" height="48" fill="#000"/><g fill="#504810"><rect x="5" y="7" width="1" height="1"/><rect x="14" y="20" width="1" height="1"/><rect x="27" y="11" width="1" height="1"/><rect x="9" y="35" width="1" height="1"/><rect x="30" y="40" width="1" height="1"/><rect x="20" y="30" width="1" height="1"/></g></svg>
<div class="t" style="left:584px;top:541px;font-size:22px;font-weight:bold;color:#ffff00;letter-spacing:1.5px;transform:scaleY(0.9);transform-origin:0 100%">żółć</div>
<svg style="left:591px;top:583px" width="33" height="34" viewBox="0 0 33 34"><defs><radialGradient id="ez" cx="0.3" cy="0.75" r="0.8"><stop offset="0" stop-color="#b8b8f0"/><stop offset="0.45" stop-color="#8080c8"/><stop offset="0.8" stop-color="#303060"/><stop offset="1" stop-color="#101020"/></radialGradient><clipPath id="ezc"><circle cx="16.5" cy="17" r="16"/></clipPath></defs><circle cx="16.5" cy="17" r="16" fill="url(#ez)"/><g clip-path="url(#ezc)"><path d="M0 0H20Q14 8 6 10Q2 12 0 16z" fill="#0a0a14" opacity="0.8"/><path d="M12 1Q24 0 33 10V26Q28 24 24 20Q20 18 22 12Q16 10 14 6z" fill="#30a020"/><path d="M18 6l3 2l-2 3zM24 12l4 1l-1 4zM15 3l2 1l-1 2z" fill="#102000"/></g></svg>
<svg style="left:591px;top:631px" width="32" height="33" viewBox="0 0 32 33"><defs><radialGradient id="u1" cx="0.35" cy="0.6" r="0.75"><stop offset="0" stop-color="#fffff0"/><stop offset="0.25" stop-color="#f0e8a0"/><stop offset="0.5" stop-color="#c8b000"/><stop offset="0.8" stop-color="#605000"/><stop offset="1" stop-color="#181000"/></radialGradient><clipPath id="u1c"><circle cx="16" cy="16.5" r="15.8"/></clipPath></defs><circle cx="16" cy="16.5" r="15.8" fill="url(#u1)"/><g clip-path="url(#u1c)"><path d="M6 6Q14 -1 24 3Q30 8 30 14Q24 12 20 8Q14 10 8 12z" fill="#e8d000" opacity="0.85"/><path d="M12 4l4 3l-3 2zM22 6l4 2l-2 3z" fill="#806000" opacity="0.7"/></g></svg>
<svg style="left:591px;top:680px" width="32" height="31" viewBox="0 0 32 31"><defs><radialGradient id="u2" cx="0.6" cy="0.25" r="0.8"><stop offset="0" stop-color="#ffd0c0"/><stop offset="0.15" stop-color="#e06848"/><stop offset="0.5" stop-color="#b83010"/><stop offset="0.85" stop-color="#701800"/><stop offset="1" stop-color="#401000"/></radialGradient></defs><circle cx="16" cy="15.5" r="15.5" fill="url(#u2)"/><path d="M4 12Q6 6 10 5" stroke="#f0a090" stroke-width="1.5" fill="none" opacity="0.7"/></svg>
<svg style="left:634px;top:546px" width="11" height="7" viewBox="0 0 11 7"><path d="M1 4Q5.5 -1 10 4" fill="none" stroke="#ffffc0" stroke-width="1.3"/><path d="M1 4Q5.5 8 10 4" fill="none" stroke="#ffffc0" stroke-width="1"/><circle cx="5.5" cy="4" r="1.6" fill="#c0c080"/></svg>
<svg style="left:651px;top:545px" width="10" height="12" viewBox="0 0 10 12"><path d="M3 3V2M7 3V2" stroke="#c0c0a0"/><path d="M1 6h8M1 8h8M1 10h8" stroke="#d0d0d0"/></svg>
<svg style="left:634px;top:594px" width="11" height="7"><use href="#eye" width="11" height="7"/></svg>
<svg style="left:634px;top:642px" width="11" height="7"><use href="#eye" width="11" height="7"/></svg>
<svg style="left:634px;top:690px" width="11" height="7"><use href="#eye" width="11" height="7"/></svg>
<svg style="left:651px;top:592px" width="10" height="13"><use href="#lock" width="10" height="13"/></svg>
<svg style="left:651px;top:640px" width="10" height="13"><use href="#lock" width="10" height="13"/></svg>
<svg style="left:651px;top:688px" width="10" height="13"><use href="#lock" width="10" height="13"/></svg>
<!-- object icons -->
<svg style="left:585px;top:723px" width="16" height="16" viewBox="0 0 16 16"><g fill="none" stroke="#808080" stroke-dasharray="2 1"><rect x="1.5" y="1.5" width="9" height="9"/><rect x="5.5" y="5.5" width="9" height="9"/></g><g fill="#808080"><rect x="0" y="0" width="3" height="3"/><rect x="13" y="13" width="3" height="3"/><rect x="0" y="9" width="3" height="3"/><rect x="13" y="4" width="3" height="3"/></g></svg>
<svg style="left:612px;top:724px" width="16" height="16" viewBox="0 0 16 16"><rect x="0.5" y="0.5" width="11" height="11" fill="none" stroke="#000080" stroke-width="1.2"/><path d="M5 6L14 15M14 6L5 15" stroke="#ff0000" stroke-width="2"/></svg>
<svg style="left:641px;top:723px" width="16" height="16" viewBox="0 0 16 16"><path d="M4 0v12h12M0 4h12v12" fill="none" stroke="#00a0a0" stroke-width="1.2"/><path d="M2 14L15 1" stroke="#000" stroke-width="1.2"/></svg>
<svg style="left:666px;top:727px" width="16" height="10" viewBox="0 0 16 10"><path d="M15 1Q10 1 7 5Q4 9 1 9M15 9Q10 9 7 5Q4 1 1 1" fill="none" stroke="#000" stroke-width="2"/><path d="M1 1Q-1 5 1 9" fill="none" stroke="#000" stroke-width="2"/></svg>
<svg style="left:728px;top:727px" width="14" height="9" viewBox="0 0 14 9"><path d="M7 0L14 6H10V9H4V6H0z" fill="#000"/></svg>
<svg style="left:755px;top:727px" width="14" height="9" viewBox="0 0 14 9"><path d="M7 9L14 3H10V0H4V3H0z" fill="#000"/></svg>

<!-- ===== DOC WINDOW ===== -->
<div class="a" style="left:33px;top:117px;width:336px;height:430px;background:#c0c0c0;box-shadow:inset 1px 1px #dfdfdf,inset 2px 2px #fff,inset -1px -1px #000,inset -2px -2px #808080"></div>
<div class="a tb" style="left:36px;top:121px;width:329px;height:18px"></div>
<svg style="left:38px;top:122px" width="15" height="15" viewBox="0 0 15 15"><path d="M0.5 0.5h10l4 4v10h-14z" fill="#fff" stroke="#c0c0c0" stroke-width="1"/><path d="M10.5 0.5v4h4" fill="#c0c0c0"/><path d="M3 3 L12 13" stroke="#d8b000" stroke-width="2.2"/><path d="M2 2 L6 6" stroke="#0000c0" stroke-width="3"/><path d="M12 13 L13.5 14.5" stroke="#000" stroke-width="1.5"/></svg>
<div class="t" style="left:57px;top:124px;color:#fff;font-weight:bold;font-size:11.5px">100% SPACE.PPF</div>
<div class="cap" style="left:313px;top:123px;width:16px;height:14px"></div>
<div class="a" style="left:317px;top:131px;width:6px;height:2px;background:#000"></div>
<div class="cap" style="left:329px;top:123px;width:16px;height:14px"></div>
<div class="a" style="left:332px;top:125px;width:9px;height:9px;border:1px solid #000;border-top-width:2px"></div>
<div class="cap" style="left:347px;top:123px;width:16px;height:14px"></div>
<svg style="left:350px;top:126px" width="9" height="8" viewBox="0 0 9 8"><path d="M1 0.5 L8 7.5 M8 0.5 L1 7.5" stroke="#000" stroke-width="1.6"/></svg>
<!-- ruler frame -->
<div class="a" style="left:37px;top:140px;width:326px;height:21px;background:#c0c0c0;border:1px solid #000"></div>
<div class="a" style="left:38px;top:141px;width:324px;height:1px;background:#fff"></div>
<div class="a" style="left:56px;top:141px;width:1px;height:20px;background:#000"></div>
<div class="a" style="left:37px;top:161px;width:20px;height:382px;background:#c0c0c0;border:1px solid #000;border-top:0"></div>
<div class="a" style="left:38px;top:164px;width:18px;height:1px;background:#000"></div>
<div class="a" style="left:57px;top:161px;width:305px;height:2px;background:#fff"></div>
<div class="a" style="left:57px;top:161px;width:2px;height:381px;background:#fff"></div>
<div class="a" style="left:362px;top:161px;width:1px;height:381px;background:#dfdfdf"></div>
<div class="a" style="left:59px;top:142px;width:1px;height:17px;background:#000"></div>
<div class="a" style="left:74px;top:152px;width:1px;height:6px;background:#000"></div>
<div class="a" style="left:89px;top:150px;width:1px;height:8px;background:#000"></div>
<div class="a" style="left:104px;top:152px;width:1px;height:6px;background:#000"></div>
<div class="a" style="left:119px;top:150px;width:1px;height:8px;background:#000"></div>
<div class="a" style="left:133px;top:152px;width:1px;height:6px;background:#000"></div>
<div class="a" style="left:148px;top:150px;width:1px;height:8px;background:#000"></div>
<div class="a" style="left:163px;top:152px;width:1px;height:6px;background:#000"></div>
<div class="a" style="left:178px;top:150px;width:1px;height:8px;background:#000"></div>
<div class="a" style="left:193px;top:152px;width:1px;height:6px;background:#000"></div>
<div class="a" style="left:207px;top:142px;width:1px;height:17px;background:#000"></div>
<div class="a" style="left:222px;top:152px;width:1px;height:6px;background:#000"></div>
<div class="a" style="left:237px;top:150px;width:1px;height:8px;background:#000"></div>
<div class="a" style="left:252px;top:152px;width:1px;height:6px;background:#000"></div>
<div class="a" style="left:267px;top:150px;width:1px;height:8px;background:#000"></div>
<div class="a" style="left:281px;top:152px;width:1px;height:6px;background:#000"></div>
<div class="a" style="left:296px;top:150px;width:1px;height:8px;background:#000"></div>
<div class="a" style="left:311px;top:152px;width:1px;height:6px;background:#000"></div>
<div class="a" style="left:326px;top:150px;width:1px;height:8px;background:#000"></div>
<div class="a" style="left:341px;top:152px;width:1px;height:6px;background:#000"></div>
<div class="a" style="left:355px;top:142px;width:1px;height:17px;background:#000"></div>
<div class="a" style="left:38px;top:165px;width:17px;height:1px;background:#000"></div>
<div class="a" style="left:49px;top:180px;width:6px;height:1px;background:#000"></div>
<div class="a" style="left:47px;top:195px;width:8px;height:1px;background:#000"></div>
<div class="a" style="left:49px;top:209px;width:6px;height:1px;background:#000"></div>
<div class="a" style="left:47px;top:224px;width:8px;height:1px;background:#000"></div>
<div class="a" style="left:49px;top:239px;width:6px;height:1px;background:#000"></div>
<div class="a" style="left:47px;top:254px;width:8px;height:1px;background:#000"></div>
<div class="a" style="left:49px;top:269px;width:6px;height:1px;background:#000"></div>
<div class="a" style="left:47px;top:283px;width:8px;height:1px;background:#000"></div>
<div class="a" style="left:49px;top:298px;width:6px;height:1px;background:#000"></div>
<div class="a" style="left:38px;top:313px;width:17px;height:1px;background:#000"></div>
<div class="a" style="left:49px;top:328px;width:6px;height:1px;background:#000"></div>
<div class="a" style="left:47px;top:343px;width:8px;height:1px;background:#000"></div>
<div class="a" style="left:49px;top:357px;width:6px;height:1px;background:#000"></div>
<div class="a" style="left:47px;top:372px;width:8px;height:1px;background:#000"></div>
<div class="a" style="left:49px;top:387px;width:6px;height:1px;background:#000"></div>
<div class="a" style="left:47px;top:402px;width:8px;height:1px;background:#000"></div>
<div class="a" style="left:49px;top:417px;width:6px;height:1px;background:#000"></div>
<div class="a" style="left:47px;top:431px;width:8px;height:1px;background:#000"></div>
<div class="a" style="left:49px;top:446px;width:6px;height:1px;background:#000"></div>
<div class="a" style="left:38px;top:461px;width:17px;height:1px;background:#000"></div>
<div class="a" style="left:49px;top:476px;width:6px;height:1px;background:#000"></div>
<div class="a" style="left:47px;top:491px;width:8px;height:1px;background:#000"></div>
<div class="a" style="left:49px;top:505px;width:6px;height:1px;background:#000"></div>
<div class="a" style="left:47px;top:520px;width:8px;height:1px;background:#000"></div>
<div class="a" style="left:49px;top:535px;width:6px;height:1px;background:#000"></div>
<div class="a" style="left:233px;top:142px;width:1px;height:17px;background:#000"></div>
<div class="a" style="left:38px;top:275px;width:17px;height:1px;background:#000"></div>
<div class="t" style="left:61px;top:145px;font-size:11px">0</div>
<div class="t" style="left:210px;top:145px;font-size:11px">50</div>
<div class="t" style="left:357px;top:145px;font-size:11px">1</div>
<div class="t" style="left:42px;top:166px;font-size:11px">0</div>
<div class="t" style="left:42px;top:313px;font-size:11px;line-height:11px">5<br>0</div>
<div class="t" style="left:42px;top:462px;font-size:11px;line-height:11px">1<br>0<br>0</div>
<!-- canvas -->
<svg style="left:60px;top:165px" width="301" height="376" viewBox="60 165 301 376">
<defs>
<radialGradient id="glow" cx="0.5" cy="0.5" r="0.5"><stop offset="0" stop-color="#fff890"/><stop offset="0.5" stop-color="#f8f000"/><stop offset="0.8" stop-color="#f0e000"/><stop offset="0.92" stop-color="#c8b000"/><stop offset="1" stop-color="#403000" stop-opacity="0"/></radialGradient>
<radialGradient id="bigR" cx="0.45" cy="0.45" r="0.6"><stop offset="0" stop-color="#c82008"/><stop offset="0.55" stop-color="#b01400"/><stop offset="0.85" stop-color="#780800"/><stop offset="1" stop-color="#400400"/></radialGradient>
<radialGradient id="bigY" cx="0.55" cy="0.35" r="0.62"><stop offset="0" stop-color="#ffff80"/><stop offset="0.3" stop-color="#f4ec30"/><stop offset="0.7" stop-color="#d8c400"/><stop offset="1" stop-color="#686000"/></radialGradient>
<linearGradient id="mgrad" x1="0.6" y1="0" x2="0.4" y2="1"><stop offset="0" stop-color="#a8a8a8"/><stop offset="0.35" stop-color="#acacac"/><stop offset="0.62" stop-color="#808080"/><stop offset="0.74" stop-color="#202020"/><stop offset="0.85" stop-color="#000"/><stop offset="0.95" stop-color="#404040"/><stop offset="1" stop-color="#606060"/></linearGradient>
<filter id="mot" x="0" y="0" width="1" height="1" color-interpolation-filters="sRGB"><feTurbulence type="fractalNoise" baseFrequency="0.2" numOctaves="3" seed="7" result="n"/><feColorMatrix in="n" type="matrix" values="1 0 0 0 0  1 0 0 0 0  1 0 0 0 0  0 0 0 0 1" result="n2"/><feComposite in="SourceGraphic" in2="n2" operator="arithmetic" k1="0" k2="1" k3="1" k4="-0.92" result="sum"/><feColorMatrix in="sum" type="matrix" values="0 0 0 0 1  0 0 0 0 1  0 0 0 0 1  10 0 0 0 -0.3"/></filter>
<mask id="mk" maskUnits="userSpaceOnUse" x="240" y="170" width="120" height="120"><rect x="244" y="172" width="112" height="112" fill="url(#mgrad)" filter="url(#mot)"/></mask>
<radialGradient id="grn" cx="0.45" cy="0.85" r="0.8"><stop offset="0" stop-color="#e0d820"/><stop offset="0.4" stop-color="#c8c000"/><stop offset="0.75" stop-color="#989000"/><stop offset="1" stop-color="#484000"/></radialGradient>
<radialGradient id="org" cx="0.5" cy="0.25" r="0.75"><stop offset="0" stop-color="#f8c040"/><stop offset="0.3" stop-color="#d06810"/><stop offset="0.7" stop-color="#a03800"/><stop offset="1" stop-color="#401400"/></radialGradient>
<radialGradient id="yel" cx="0.4" cy="0.4" r="0.65"><stop offset="0" stop-color="#fff060"/><stop offset="0.5" stop-color="#e8d400"/><stop offset="0.85" stop-color="#b09800"/><stop offset="1" stop-color="#504000"/></radialGradient>
<linearGradient id="rdark" x1="0" y1="0" x2="0" y2="1"><stop offset="0" stop-color="#500000" stop-opacity="0.6"/><stop offset="0.5" stop-color="#600000" stop-opacity="0.3"/><stop offset="0.7" stop-color="#600000" stop-opacity="0"/></linearGradient>
<radialGradient id="rim" cx="0.45" cy="0.4" r="0.6"><stop offset="0.7" stop-color="#000" stop-opacity="0"/><stop offset="1" stop-color="#200000" stop-opacity="0.55"/></radialGradient>
<clipPath id="cglow"><ellipse cx="262" cy="249" rx="56" ry="59"/></clipPath>
<filter id="gmot" x="0" y="0" width="1" height="1" color-interpolation-filters="sRGB"><feTurbulence type="fractalNoise" baseFrequency="0.07" numOctaves="3" seed="21"/><feColorMatrix type="matrix" values="0 0 0 0 1  0 0 0 0 0.98  0 0 0 0 0.75  4 0 0 0 -1.9"/><feGaussianBlur stdDeviation="1.5"/></filter>
<radialGradient id="glowrim" cx="0.5" cy="0.5" r="0.5"><stop offset="0.8" stop-color="#a08000" stop-opacity="0"/><stop offset="0.93" stop-color="#b09000" stop-opacity="0.35"/><stop offset="1" stop-color="#000" stop-opacity="0"/></radialGradient>
<radialGradient id="gmg"><stop offset="0.5" stop-color="#fff"/><stop offset="1" stop-color="#000"/></radialGradient><mask id="gmask" maskUnits="userSpaceOnUse" x="250" y="290" width="70" height="70"><ellipse cx="297" cy="318" rx="16" ry="20" fill="url(#gmg)"/></mask>
<filter id="blur1"><feGaussianBlur stdDeviation="1.5"/></filter>
<filter id="blur"><feGaussianBlur stdDeviation="2.5"/></filter>
<filter id="stars" x="0" y="0" width="1" height="1" color-interpolation-filters="sRGB"><feTurbulence type="turbulence" baseFrequency="0.9" numOctaves="1" seed="3"/><feColorMatrix type="matrix" values="0 0 0 0 0.3  0 0 0 0 0.28  0 0 0 0 0.06  8 0 0 0 -3.2"/></filter>
<filter id="gm" x="0" y="0" width="1" height="1"><feTurbulence type="fractalNoise" baseFrequency="0.22" numOctaves="2" seed="11"/><feColorMatrix type="matrix" values="0 0 0 0 0.25  0 0 0 0 0.72  0 0 0 0 0.05  -9 0 0 0 4.9"/></filter>
<clipPath id="cg"><circle cx="282" cy="328" r="26"/></clipPath>
<radialGradient id="gshade" cx="0.6" cy="0.75" r="0.8"><stop offset="0.45" stop-color="#000" stop-opacity="0"/><stop offset="1" stop-color="#000" stop-opacity="0.8"/></radialGradient>
</defs>
<g id="scene"><rect x="60" y="165" width="301" height="376" fill="#000"/>
<g><path fill="#262408" d="M101 336h1v1h-1zM62 375h1v1h-1zM117 470h1v1h-1zM163 334h1v1h-1zM102 233h1v1h-1zM148 476h1v1h-1zM197 459h1v1h-1zM181 247h1v1h-1zM161 459h1v1h-1zM112 429h1v1h-1zM135 171h1v1h-1zM259 315h1v1h-1zM143 278h1v1h-1zM311 397h1v1h-1zM310 491h1v1h-1zM101 261h1v1h-1zM250 218h1v1h-1zM127 318h1v1h-1zM228 370h1v1h-1zM222 443h1v1h-1zM297 532h1v1h-1zM96 279h1v1h-1zM64 321h1v1h-1zM237 472h1v1h-1zM351 381h1v1h-1zM314 355h1v1h-1zM329 260h1v1h-1zM148 179h1v1h-1zM211 280h1v1h-1zM343 513h1v1h-1zM84 272h1v1h-1zM278 255h1v1h-1zM146 476h1v1h-1zM183 314h1v1h-1zM325 225h1v1h-1zM319 402h1v1h-1zM355 425h1v1h-1zM115 208h1v1h-1zM289 443h1v1h-1zM232 505h1v1h-1zM64 369h1v1h-1zM306 175h1v1h-1zM170 328h1v1h-1zM191 238h1v1h-1zM133 333h1v1h-1zM150 178h1v1h-1zM198 391h1v1h-1zM245 530h1v1h-1zM190 193h1v1h-1zM113 331h1v1h-1zM236 291h1v1h-1zM210 448h1v1h-1zM90 203h1v1h-1zM111 361h1v1h-1zM249 308h1v1h-1zM101 499h1v1h-1zM219 277h1v1h-1zM357 191h1v1h-1zM101 334h1v1h-1zM336 532h1v1h-1zM104 447h1v1h-1zM271 182h1v1h-1zM105 528h1v1h-1zM198 437h1v1h-1zM335 190h1v1h-1zM294 500h1v1h-1zM283 276h1v1h-1zM238 306h1v1h-1zM189 387h1v1h-1zM223 476h1v1h-1zM301 457h1v1h-1zM77 388h1v1h-1zM219 287h1v1h-1zM338 523h1v1h-1zM262 300h1v1h-1zM215 292h1v1h-1zM354 414h1v1h-1zM174 518h1v1h-1zM224 463h1v1h-1zM102 449h1v1h-1zM113 322h1v1h-1zM323 340h1v1h-1zM302 532h1v1h-1zM187 424h1v1h-1zM178 307h1v1h-1zM109 195h1v1h-1zM326 368h1v1h-1zM274 200h1v1h-1zM306 449h1v1h-1zM345 465h1v1h-1zM299 407h1v1h-1zM248 461h1v1h-1zM291 522h1v1h-1zM98 540h1v1h-1zM320 440h1v1h-1zM345 468h1v1h-1zM222 347h1v1h-1zM297 366h1v1h-1zM103 451h1v1h-1zM83 312h1v1h-1zM155 169h1v1h-1zM256 200h1v1h-1zM65 208h1v1h-1zM195 165h1v1h-1zM319 288h1v1h-1zM187 325h1v1h-1zM286 178h1v1h-1zM258 196h1v1h-1zM316 401h1v1h-1zM78 413h1v1h-1zM191 443h1v1h-1zM215 429h1v1h-1zM130 384h1v1h-1zM304 449h1v1h-1zM194 206h1v1h-1zM157 295h1v1h-1zM188 444h1v1h-1zM170 252h1v1h-1zM255 217h1v1h-1zM352 349h1v1h-1zM355 306h1v1h-1zM63 476h1v1h-1zM112 432h1v1h-1zM330 451h1v1h-1zM81 376h1v1h-1zM72 459h1v1h-1zM219 301h1v1h-1zM82 372h1v1h-1zM266 240h1v1h-1zM141 353h1v1h-1zM124 228h1v1h-1zM333 297h1v1h-1zM96 221h1v1h-1zM234 423h1v1h-1zM247 398h1v1h-1zM242 396h1v1h-1zM247 232h1v1h-1zM148 462h1v1h-1zM286 491h1v1h-1zM116 465h1v1h-1zM252 183h1v1h-1zM258 293h1v1h-1zM260 454h1v1h-1zM223 388h1v1h-1zM79 535h1v1h-1zM313 273h1v1h-1zM281 492h1v1h-1zM355 184h1v1h-1zM254 175h1v1h-1zM307 215h1v1h-1zM240 363h1v1h-1zM162 201h1v1h-1zM259 281h1v1h-1zM155 487h1v1h-1zM230 313h1v1h-1zM351 375h1v1h-1zM317 224h1v1h-1zM290 389h1v1h-1zM125 409h1v1h-1zM215 478h1v1h-1zM196 307h1v1h-1zM183 325h1v1h-1zM121 415h1v1h-1zM181 231h1v1h-1zM60 439h1v1h-1zM234 253h1v1h-1zM321 416h1v1h-1zM198 296h1v1h-1zM270 179h1v1h-1zM296 455h1v1h-1zM101 444h1v1h-1zM326 375h1v1h-1zM267 486h1v1h-1zM117 371h1v1h-1zM358 429h1v1h-1zM109 453h1v1h-1zM79 200h1v1h-1zM218 176h1v1h-1zM249 379h1v1h-1zM257 450h1v1h-1zM96 432h1v1h-1zM81 312h1v1h-1zM149 466h1v1h-1zM167 489h1v1h-1zM220 507h1v1h-1zM195 233h1v1h-1zM75 391h1v1h-1zM75 306h1v1h-1zM210 287h1v1h-1zM185 179h1v1h-1zM134 283h1v1h-1zM253 410h1v1h-1zM247 279h1v1h-1zM162 441h1v1h-1zM156 437h1v1h-1zM220 217h1v1h-1zM296 334h1v1h-1zM116 484h1v1h-1zM183 372h1v1h-1zM309 447h1v1h-1zM229 184h1v1h-1zM141 497h1v1h-1zM324 401h1v1h-1zM323 264h1v1h-1zM105 378h1v1h-1zM147 353h1v1h-1zM77 313h1v1h-1zM96 533h1v1h-1zM139 451h1v1h-1zM77 501h1v1h-1zM71 368h1v1h-1zM77 440h1v1h-1zM201 228h1v1h-1zM350 513h1v1h-1zM129 364h1v1h-1zM154 456h1v1h-1zM327 451h1v1h-1zM355 226h1v1h-1zM90 440h1v1h-1zM62 332h1v1h-1zM107 356h1v1h-1zM327 257h1v1h-1zM261 481h1v1h-1zM216 455h1v1h-1zM333 212h1v1h-1zM194 383h1v1h-1zM165 205h1v1h-1zM72 198h1v1h-1z"/><path fill="#34300c" d="M181 191h1v1h-1zM127 424h1v1h-1zM247 510h1v1h-1zM60 386h1v1h-1zM198 331h1v1h-1zM194 249h1v1h-1zM313 343h1v1h-1zM148 487h1v1h-1zM194 439h1v1h-1zM338 323h1v1h-1zM130 217h1v1h-1zM184 183h1v1h-1zM268 466h1v1h-1zM152 208h1v1h-1zM73 525h1v1h-1zM158 278h1v1h-1zM116 191h1v1h-1zM98 495h1v1h-1zM249 489h1v1h-1zM63 319h1v1h-1zM130 485h1v1h-1zM323 422h1v1h-1zM221 186h1v1h-1zM335 507h1v1h-1zM152 505h1v1h-1zM128 272h1v1h-1zM243 345h1v1h-1zM92 496h1v1h-1zM162 390h1v1h-1zM334 419h1v1h-1zM205 389h1v1h-1zM144 516h1v1h-1zM353 200h1v1h-1zM122 472h1v1h-1zM180 348h1v1h-1zM140 353h1v1h-1zM142 372h1v1h-1zM136 308h1v1h-1zM63 353h1v1h-1zM107 213h1v1h-1zM80 351h1v1h-1zM298 483h1v1h-1zM77 234h1v1h-1zM322 297h1v1h-1zM138 266h1v1h-1zM349 352h1v1h-1zM67 442h1v1h-1zM226 388h1v1h-1zM72 310h1v1h-1zM73 172h1v1h-1zM185 361h1v1h-1zM69 484h1v1h-1zM252 246h1v1h-1zM274 349h1v1h-1zM70 245h1v1h-1zM170 428h1v1h-1zM316 531h1v1h-1zM138 484h1v1h-1zM218 169h1v1h-1zM157 329h1v1h-1zM293 305h1v1h-1zM262 394h1v1h-1zM153 184h1v1h-1zM215 477h1v1h-1zM333 394h1v1h-1zM229 500h1v1h-1zM267 379h1v1h-1zM193 439h1v1h-1zM278 217h1v1h-1zM137 309h1v1h-1zM205 189h1v1h-1zM110 286h1v1h-1zM301 193h1v1h-1zM67 274h1v1h-1zM196 432h1v1h-1zM300 511h1v1h-1zM198 170h1v1h-1zM84 364h1v1h-1zM160 427h1v1h-1zM168 477h1v1h-1zM261 353h1v1h-1zM304 282h1v1h-1zM252 408h1v1h-1zM218 440h1v1h-1zM115 509h1v1h-1zM241 457h1v1h-1zM222 303h1v1h-1zM186 307h1v1h-1zM113 503h1v1h-1zM162 209h1v1h-1zM80 183h1v1h-1zM278 208h1v1h-1zM182 487h1v1h-1zM219 477h1v1h-1zM71 433h1v1h-1zM104 246h1v1h-1zM77 495h1v1h-1zM188 488h1v1h-1zM325 396h1v1h-1zM331 233h1v1h-1zM351 297h1v1h-1zM294 505h1v1h-1zM229 384h1v1h-1zM151 448h1v1h-1zM117 532h1v1h-1zM317 312h1v1h-1zM202 308h1v1h-1zM189 319h1v1h-1zM164 389h1v1h-1zM113 210h1v1h-1zM107 384h1v1h-1zM112 258h1v1h-1zM121 446h1v1h-1zM205 337h1v1h-1zM72 515h1v1h-1zM317 171h1v1h-1zM254 318h1v1h-1zM147 215h1v1h-1zM351 530h1v1h-1zM61 262h1v1h-1zM101 266h1v1h-1zM329 254h1v1h-1zM82 333h1v1h-1zM121 170h1v1h-1zM139 512h1v1h-1zM276 261h1v1h-1zM245 241h1v1h-1zM355 196h1v1h-1zM250 394h1v1h-1zM221 391h1v1h-1zM82 357h1v1h-1zM293 529h1v1h-1zM103 179h1v1h-1zM157 247h1v1h-1zM109 470h1v1h-1zM158 397h1v1h-1zM297 327h1v1h-1zM91 384h1v1h-1zM258 301h1v1h-1zM64 177h1v1h-1zM126 489h1v1h-1zM107 319h1v1h-1zM98 497h1v1h-1zM184 436h1v1h-1zM311 495h1v1h-1zM196 444h1v1h-1zM156 463h1v1h-1zM338 432h1v1h-1zM207 446h1v1h-1zM126 214h1v1h-1zM297 288h1v1h-1zM332 262h1v1h-1zM296 166h1v1h-1zM149 538h1v1h-1zM116 209h1v1h-1zM171 470h1v1h-1zM283 263h1v1h-1zM214 341h1v1h-1zM107 517h1v1h-1zM170 223h1v1h-1zM194 505h1v1h-1zM204 195h1v1h-1zM242 477h1v1h-1zM126 509h1v1h-1zM338 417h1v1h-1zM86 273h1v1h-1zM325 528h1v1h-1zM216 189h1v1h-1zM96 342h1v1h-1zM121 209h1v1h-1zM173 300h1v1h-1zM64 374h1v1h-1zM123 217h1v1h-1zM291 407h1v1h-1zM156 425h1v1h-1zM131 477h1v1h-1zM300 401h1v1h-1zM344 195h1v1h-1zM196 352h1v1h-1zM95 204h1v1h-1zM203 239h1v1h-1zM140 234h1v1h-1zM74 425h1v1h-1zM248 263h1v1h-1zM309 349h1v1h-1zM62 358h1v1h-1zM213 324h1v1h-1zM153 226h1v1h-1zM243 269h1v1h-1zM201 244h1v1h-1zM76 233h1v1h-1zM87 191h1v1h-1zM168 382h1v1h-1zM107 249h1v1h-1zM230 515h1v1h-1zM293 309h1v1h-1zM268 498h1v1h-1zM258 461h1v1h-1zM193 391h1v1h-1zM65 339h1v1h-1zM130 178h1v1h-1zM253 536h1v1h-1zM128 274h1v1h-1zM347 364h1v1h-1zM193 462h1v1h-1zM188 458h1v1h-1zM337 507h1v1h-1zM134 418h1v1h-1zM298 220h1v1h-1zM264 297h1v1h-1zM200 486h1v1h-1zM211 380h1v1h-1zM162 417h1v1h-1zM258 192h1v1h-1zM206 502h1v1h-1zM96 248h1v1h-1zM336 452h1v1h-1zM152 415h1v1h-1z"/><path fill="#201f0a" d="M196 235h1v1h-1zM276 245h1v1h-1zM253 416h1v1h-1zM107 523h1v1h-1zM87 303h1v1h-1zM75 190h1v1h-1zM241 310h1v1h-1zM84 306h1v1h-1zM178 396h1v1h-1zM285 362h1v1h-1zM226 212h1v1h-1zM136 333h1v1h-1zM262 364h1v1h-1zM224 362h1v1h-1zM151 457h1v1h-1zM151 334h1v1h-1zM73 461h1v1h-1zM167 443h1v1h-1zM344 215h1v1h-1zM233 310h1v1h-1zM81 325h1v1h-1zM76 368h1v1h-1zM225 451h1v1h-1zM184 458h1v1h-1zM93 373h1v1h-1zM133 380h1v1h-1zM143 465h1v1h-1zM87 393h1v1h-1zM109 226h1v1h-1zM137 537h1v1h-1zM73 286h1v1h-1zM68 513h1v1h-1zM319 242h1v1h-1zM305 451h1v1h-1zM201 266h1v1h-1zM295 505h1v1h-1zM132 394h1v1h-1zM339 339h1v1h-1zM122 421h1v1h-1zM117 216h1v1h-1zM119 191h1v1h-1zM182 192h1v1h-1zM110 538h1v1h-1zM126 399h1v1h-1zM358 275h1v1h-1zM360 485h1v1h-1zM215 538h1v1h-1zM79 198h1v1h-1zM175 240h1v1h-1zM322 383h1v1h-1zM228 303h1v1h-1zM275 458h1v1h-1zM77 367h1v1h-1zM353 212h1v1h-1zM298 284h1v1h-1zM313 501h1v1h-1zM107 382h1v1h-1zM359 192h1v1h-1zM81 360h1v1h-1zM350 460h1v1h-1zM277 278h1v1h-1zM342 450h1v1h-1zM83 225h1v1h-1zM121 292h1v1h-1zM185 306h1v1h-1zM150 461h1v1h-1zM198 251h1v1h-1zM186 485h1v1h-1zM105 330h1v1h-1zM265 440h1v1h-1zM268 174h1v1h-1zM285 341h1v1h-1zM138 496h1v1h-1zM177 201h1v1h-1zM346 261h1v1h-1zM197 338h1v1h-1zM305 293h1v1h-1zM337 300h1v1h-1zM321 278h1v1h-1zM223 453h1v1h-1zM296 305h1v1h-1zM144 376h1v1h-1zM119 319h1v1h-1zM81 327h1v1h-1zM332 229h1v1h-1zM243 370h1v1h-1zM341 341h1v1h-1zM65 429h1v1h-1zM313 262h1v1h-1zM203 234h1v1h-1zM176 194h1v1h-1zM324 511h1v1h-1zM306 466h1v1h-1zM213 373h1v1h-1zM208 368h1v1h-1zM224 214h1v1h-1zM332 388h1v1h-1zM143 317h1v1h-1zM329 426h1v1h-1zM78 193h1v1h-1zM257 454h1v1h-1zM332 447h1v1h-1zM137 459h1v1h-1zM269 402h1v1h-1zM305 455h1v1h-1zM257 355h1v1h-1zM258 176h1v1h-1zM299 335h1v1h-1zM257 318h1v1h-1zM339 439h1v1h-1zM73 363h1v1h-1zM239 358h1v1h-1zM357 308h1v1h-1zM312 289h1v1h-1zM311 243h1v1h-1zM247 489h1v1h-1zM219 341h1v1h-1zM295 327h1v1h-1zM109 221h1v1h-1zM352 257h1v1h-1zM61 398h1v1h-1zM327 189h1v1h-1zM219 512h1v1h-1zM225 248h1v1h-1zM310 431h1v1h-1zM110 469h1v1h-1zM84 534h1v1h-1zM282 225h1v1h-1zM235 175h1v1h-1zM289 260h1v1h-1zM260 458h1v1h-1zM343 305h1v1h-1zM294 244h1v1h-1zM214 474h1v1h-1zM179 205h1v1h-1zM71 413h1v1h-1zM153 165h1v1h-1zM167 288h1v1h-1zM320 288h1v1h-1zM292 334h1v1h-1zM184 283h1v1h-1zM289 427h1v1h-1zM275 227h1v1h-1zM142 329h1v1h-1zM198 415h1v1h-1zM345 520h1v1h-1zM150 411h1v1h-1zM189 357h1v1h-1zM116 433h1v1h-1zM220 261h1v1h-1zM242 242h1v1h-1zM97 326h1v1h-1zM237 250h1v1h-1zM217 459h1v1h-1zM89 389h1v1h-1zM95 405h1v1h-1zM327 187h1v1h-1zM166 185h1v1h-1zM148 410h1v1h-1zM168 360h1v1h-1zM318 168h1v1h-1zM83 516h1v1h-1zM74 192h1v1h-1zM119 328h1v1h-1zM164 308h1v1h-1zM138 460h1v1h-1zM156 304h1v1h-1zM99 318h1v1h-1zM78 531h1v1h-1zM128 339h1v1h-1zM138 448h1v1h-1zM197 329h1v1h-1zM319 307h1v1h-1zM360 235h1v1h-1zM294 281h1v1h-1zM151 211h1v1h-1zM220 494h1v1h-1zM244 470h1v1h-1zM346 418h1v1h-1zM148 502h1v1h-1zM85 410h1v1h-1zM334 374h1v1h-1zM356 285h1v1h-1zM97 277h1v1h-1zM249 338h1v1h-1zM337 321h1v1h-1zM94 485h1v1h-1zM197 398h1v1h-1zM96 497h1v1h-1zM310 458h1v1h-1zM207 214h1v1h-1zM138 290h1v1h-1zM242 394h1v1h-1zM126 166h1v1h-1zM65 289h1v1h-1zM144 328h1v1h-1zM200 297h1v1h-1zM305 516h1v1h-1zM80 175h1v1h-1zM357 357h1v1h-1zM134 358h1v1h-1zM81 538h1v1h-1zM142 458h1v1h-1zM196 393h1v1h-1zM258 491h1v1h-1zM131 223h1v1h-1zM168 291h1v1h-1zM305 254h1v1h-1zM207 515h1v1h-1zM91 457h1v1h-1zM122 414h1v1h-1zM189 407h1v1h-1zM220 438h1v1h-1zM155 231h1v1h-1zM62 365h1v1h-1zM338 350h1v1h-1zM268 283h1v1h-1zM186 403h1v1h-1zM159 303h1v1h-1zM309 422h1v1h-1zM332 422h1v1h-1zM233 346h1v1h-1zM294 377h1v1h-1zM241 465h1v1h-1zM112 174h1v1h-1zM345 435h1v1h-1zM305 214h1v1h-1zM173 419h1v1h-1zM354 196h1v1h-1zM200 503h1v1h-1zM61 290h1v1h-1zM240 325h1v1h-1zM310 403h1v1h-1zM110 171h1v1h-1zM217 384h1v1h-1zM103 248h1v1h-1zM334 516h1v1h-1zM252 253h1v1h-1zM155 401h1v1h-1zM219 280h1v1h-1zM224 409h1v1h-1zM61 393h1v1h-1z"/><path fill="#3c3812" d="M164 510h1v1h-1zM234 187h1v1h-1zM122 461h1v1h-1zM95 368h1v1h-1zM314 342h1v1h-1zM91 395h1v1h-1zM92 536h1v1h-1zM74 356h1v1h-1zM299 485h1v1h-1zM325 514h1v1h-1zM221 474h1v1h-1zM264 385h1v1h-1zM205 438h1v1h-1zM243 303h1v1h-1zM305 513h1v1h-1zM276 275h1v1h-1zM283 488h1v1h-1zM336 336h1v1h-1zM360 462h1v1h-1zM133 459h1v1h-1zM334 172h1v1h-1zM219 217h1v1h-1zM246 524h1v1h-1zM321 186h1v1h-1zM193 279h1v1h-1zM160 417h1v1h-1zM248 495h1v1h-1zM120 165h1v1h-1zM180 207h1v1h-1zM341 272h1v1h-1zM194 455h1v1h-1zM97 232h1v1h-1zM301 458h1v1h-1zM195 398h1v1h-1zM68 325h1v1h-1zM307 504h1v1h-1zM248 362h1v1h-1zM288 338h1v1h-1zM111 484h1v1h-1zM66 175h1v1h-1zM93 501h1v1h-1zM98 476h1v1h-1zM137 383h1v1h-1zM271 459h1v1h-1zM77 181h1v1h-1zM267 445h1v1h-1zM241 401h1v1h-1zM73 333h1v1h-1zM120 366h1v1h-1zM232 188h1v1h-1zM352 488h1v1h-1zM114 452h1v1h-1zM75 263h1v1h-1zM271 407h1v1h-1zM290 308h1v1h-1zM331 217h1v1h-1zM99 495h1v1h-1zM65 295h1v1h-1zM327 213h1v1h-1zM282 346h1v1h-1zM142 438h1v1h-1zM247 535h1v1h-1zM65 232h1v1h-1zM259 232h1v1h-1zM297 512h1v1h-1zM147 192h1v1h-1zM302 338h1v1h-1zM321 378h1v1h-1zM312 530h1v1h-1zM246 226h1v1h-1zM206 526h1v1h-1zM84 350h1v1h-1zM332 290h1v1h-1zM185 393h1v1h-1zM280 354h1v1h-1zM120 368h1v1h-1zM117 204h1v1h-1zM278 359h1v1h-1zM62 313h1v1h-1zM126 521h1v1h-1zM314 419h1v1h-1zM104 394h1v1h-1zM65 448h1v1h-1zM291 286h1v1h-1zM155 182h1v1h-1zM89 462h1v1h-1zM227 473h1v1h-1zM250 350h1v1h-1zM231 533h1v1h-1zM178 389h1v1h-1zM65 396h1v1h-1zM244 370h1v1h-1zM97 240h1v1h-1zM273 318h1v1h-1zM152 181h1v1h-1zM217 441h1v1h-1zM333 224h1v1h-1zM319 431h1v1h-1zM152 427h1v1h-1zM148 196h1v1h-1zM196 520h1v1h-1zM136 290h1v1h-1zM263 307h1v1h-1zM216 245h1v1h-1zM115 373h1v1h-1zM159 346h1v1h-1zM176 415h1v1h-1zM97 422h1v1h-1zM318 237h1v1h-1zM130 386h1v1h-1zM276 345h1v1h-1zM79 282h1v1h-1zM228 198h1v1h-1zM274 362h1v1h-1zM227 187h1v1h-1zM135 328h1v1h-1zM220 395h1v1h-1zM76 295h1v1h-1zM87 328h1v1h-1zM348 411h1v1h-1zM161 340h1v1h-1zM195 248h1v1h-1zM216 450h1v1h-1zM279 228h1v1h-1zM196 471h1v1h-1zM311 490h1v1h-1zM286 428h1v1h-1zM268 387h1v1h-1zM337 432h1v1h-1zM359 371h1v1h-1zM209 535h1v1h-1zM124 467h1v1h-1zM291 261h1v1h-1zM74 325h1v1h-1zM288 265h1v1h-1zM191 239h1v1h-1zM261 466h1v1h-1zM143 429h1v1h-1zM294 210h1v1h-1zM123 532h1v1h-1zM66 321h1v1h-1zM300 302h1v1h-1zM231 247h1v1h-1zM186 504h1v1h-1zM161 388h1v1h-1zM120 203h1v1h-1zM157 473h1v1h-1zM293 227h1v1h-1zM98 269h1v1h-1zM351 347h1v1h-1zM74 314h1v1h-1zM159 382h1v1h-1zM190 369h1v1h-1zM215 367h1v1h-1zM278 280h1v1h-1zM202 474h1v1h-1zM143 469h1v1h-1zM356 465h1v1h-1zM308 372h1v1h-1zM317 478h1v1h-1zM226 351h1v1h-1zM128 503h1v1h-1zM80 533h1v1h-1zM175 169h1v1h-1zM271 479h1v1h-1zM327 461h1v1h-1zM276 477h1v1h-1zM144 413h1v1h-1zM274 173h1v1h-1zM131 235h1v1h-1zM322 450h1v1h-1zM356 316h1v1h-1zM104 203h1v1h-1zM62 165h1v1h-1zM119 322h1v1h-1zM168 514h1v1h-1zM334 524h1v1h-1zM335 255h1v1h-1zM179 335h1v1h-1zM344 429h1v1h-1zM64 218h1v1h-1zM130 484h1v1h-1zM81 316h1v1h-1zM285 321h1v1h-1zM359 177h1v1h-1zM227 431h1v1h-1zM331 465h1v1h-1zM142 292h1v1h-1zM359 255h1v1h-1zM277 481h1v1h-1zM244 172h1v1h-1zM77 191h1v1h-1zM330 487h1v1h-1zM142 207h1v1h-1zM267 408h1v1h-1zM145 524h1v1h-1zM277 502h1v1h-1zM68 519h1v1h-1zM305 244h1v1h-1zM191 500h1v1h-1zM198 236h1v1h-1zM104 170h1v1h-1zM225 285h1v1h-1zM288 284h1v1h-1zM174 336h1v1h-1z"/><path fill="#1c200e" d="M256 217h1v1h-1zM275 209h1v1h-1zM167 368h1v1h-1zM217 487h1v1h-1zM131 506h1v1h-1zM147 519h1v1h-1zM306 452h1v1h-1zM130 209h1v1h-1zM146 504h1v1h-1zM353 442h1v1h-1zM180 167h1v1h-1zM67 389h1v1h-1zM90 513h1v1h-1zM100 306h1v1h-1zM107 304h1v1h-1zM322 420h1v1h-1zM123 295h1v1h-1zM201 399h1v1h-1zM174 376h1v1h-1zM100 364h1v1h-1zM254 424h1v1h-1zM155 202h1v1h-1zM351 522h1v1h-1zM345 251h1v1h-1zM101 331h1v1h-1zM108 453h1v1h-1zM302 200h1v1h-1zM107 504h1v1h-1zM64 411h1v1h-1zM141 209h1v1h-1zM268 530h1v1h-1zM105 295h1v1h-1zM210 270h1v1h-1zM125 379h1v1h-1zM304 436h1v1h-1zM350 461h1v1h-1zM157 318h1v1h-1zM353 504h1v1h-1zM243 215h1v1h-1zM248 200h1v1h-1zM100 429h1v1h-1zM89 250h1v1h-1zM173 196h1v1h-1zM60 330h1v1h-1zM171 465h1v1h-1zM244 259h1v1h-1zM241 173h1v1h-1zM153 356h1v1h-1zM78 374h1v1h-1zM316 526h1v1h-1zM182 218h1v1h-1zM119 190h1v1h-1zM186 406h1v1h-1zM141 408h1v1h-1zM180 345h1v1h-1zM203 419h1v1h-1zM161 237h1v1h-1zM308 221h1v1h-1zM75 486h1v1h-1zM229 208h1v1h-1zM155 432h1v1h-1zM287 338h1v1h-1zM209 262h1v1h-1zM274 182h1v1h-1zM217 283h1v1h-1zM134 250h1v1h-1zM66 185h1v1h-1zM254 357h1v1h-1zM157 183h1v1h-1zM171 431h1v1h-1zM316 342h1v1h-1zM340 326h1v1h-1zM346 335h1v1h-1zM152 377h1v1h-1zM241 414h1v1h-1zM107 301h1v1h-1zM165 427h1v1h-1zM332 265h1v1h-1zM310 203h1v1h-1zM341 433h1v1h-1zM355 253h1v1h-1zM151 284h1v1h-1zM109 187h1v1h-1zM131 175h1v1h-1zM299 466h1v1h-1zM350 475h1v1h-1zM208 250h1v1h-1zM240 292h1v1h-1zM204 488h1v1h-1zM95 536h1v1h-1zM152 432h1v1h-1zM166 276h1v1h-1zM359 179h1v1h-1zM102 496h1v1h-1zM253 503h1v1h-1zM201 513h1v1h-1zM150 286h1v1h-1zM103 320h1v1h-1zM93 535h1v1h-1zM337 230h1v1h-1zM299 202h1v1h-1zM135 421h1v1h-1zM288 229h1v1h-1zM92 176h1v1h-1zM191 444h1v1h-1zM146 330h1v1h-1zM68 319h1v1h-1zM354 256h1v1h-1zM334 183h1v1h-1zM243 313h1v1h-1zM169 357h1v1h-1zM226 536h1v1h-1zM227 380h1v1h-1zM322 300h1v1h-1zM322 198h1v1h-1zM225 290h1v1h-1zM77 533h1v1h-1zM116 418h1v1h-1zM320 259h1v1h-1zM265 222h1v1h-1zM256 436h1v1h-1zM296 469h1v1h-1zM146 260h1v1h-1zM232 488h1v1h-1zM255 197h1v1h-1zM78 403h1v1h-1zM194 201h1v1h-1zM182 300h1v1h-1zM87 495h1v1h-1zM113 208h1v1h-1zM172 248h1v1h-1zM193 533h1v1h-1zM273 263h1v1h-1zM83 416h1v1h-1zM201 328h1v1h-1zM324 268h1v1h-1zM201 197h1v1h-1zM96 498h1v1h-1zM255 431h1v1h-1zM134 518h1v1h-1zM145 178h1v1h-1zM120 187h1v1h-1zM81 488h1v1h-1zM109 492h1v1h-1zM147 511h1v1h-1zM161 201h1v1h-1zM128 529h1v1h-1zM231 335h1v1h-1zM359 362h1v1h-1zM229 343h1v1h-1zM197 175h1v1h-1zM191 440h1v1h-1zM255 292h1v1h-1zM173 405h1v1h-1zM200 376h1v1h-1zM272 328h1v1h-1zM109 185h1v1h-1zM306 294h1v1h-1zM281 516h1v1h-1zM309 412h1v1h-1zM70 168h1v1h-1zM87 302h1v1h-1zM163 371h1v1h-1zM127 434h1v1h-1zM300 218h1v1h-1zM314 173h1v1h-1zM63 453h1v1h-1zM253 468h1v1h-1zM260 474h1v1h-1zM174 326h1v1h-1zM203 468h1v1h-1zM132 266h1v1h-1zM299 221h1v1h-1zM185 508h1v1h-1zM263 242h1v1h-1zM196 190h1v1h-1zM140 188h1v1h-1zM67 530h1v1h-1zM340 372h1v1h-1zM77 531h1v1h-1zM266 379h1v1h-1zM79 403h1v1h-1zM74 205h1v1h-1zM141 385h1v1h-1zM183 185h1v1h-1zM135 459h1v1h-1zM72 473h1v1h-1zM200 431h1v1h-1zM346 188h1v1h-1zM154 208h1v1h-1zM119 532h1v1h-1zM285 301h1v1h-1zM225 432h1v1h-1zM190 328h1v1h-1zM192 384h1v1h-1zM145 470h1v1h-1zM297 285h1v1h-1zM177 500h1v1h-1zM94 413h1v1h-1zM269 353h1v1h-1zM136 397h1v1h-1zM73 190h1v1h-1zM157 268h1v1h-1zM197 335h1v1h-1zM247 456h1v1h-1zM292 209h1v1h-1zM122 470h1v1h-1zM74 171h1v1h-1zM360 253h1v1h-1zM275 523h1v1h-1zM208 310h1v1h-1zM69 198h1v1h-1zM125 523h1v1h-1zM248 456h1v1h-1z"/><path fill="#2c2a0c" d="M297 478h1v1h-1zM237 221h1v1h-1zM254 476h1v1h-1zM321 355h1v1h-1zM294 283h1v1h-1zM230 208h1v1h-1zM130 219h1v1h-1zM186 378h1v1h-1zM311 453h1v1h-1zM156 273h1v1h-1zM168 521h1v1h-1zM300 281h1v1h-1zM320 518h1v1h-1zM339 307h1v1h-1zM292 233h1v1h-1zM344 190h1v1h-1zM360 208h1v1h-1zM189 356h1v1h-1zM199 354h1v1h-1zM77 247h1v1h-1zM113 194h1v1h-1zM246 396h1v1h-1zM318 494h1v1h-1zM325 355h1v1h-1zM149 247h1v1h-1zM188 487h1v1h-1zM258 366h1v1h-1zM128 278h1v1h-1zM291 296h1v1h-1zM327 502h1v1h-1zM278 167h1v1h-1zM332 401h1v1h-1zM251 260h1v1h-1zM323 326h1v1h-1zM82 189h1v1h-1zM152 190h1v1h-1zM279 368h1v1h-1zM165 424h1v1h-1zM280 466h1v1h-1zM356 235h1v1h-1zM180 458h1v1h-1zM175 258h1v1h-1zM298 498h1v1h-1zM186 240h1v1h-1zM84 219h1v1h-1zM162 189h1v1h-1zM64 274h1v1h-1zM237 219h1v1h-1zM313 397h1v1h-1zM350 315h1v1h-1zM283 441h1v1h-1zM302 437h1v1h-1zM310 394h1v1h-1zM281 339h1v1h-1zM354 460h1v1h-1zM96 252h1v1h-1zM159 388h1v1h-1zM309 446h1v1h-1zM352 288h1v1h-1zM151 226h1v1h-1zM306 346h1v1h-1zM162 210h1v1h-1zM251 285h1v1h-1zM252 361h1v1h-1zM263 386h1v1h-1zM160 333h1v1h-1zM353 235h1v1h-1zM78 431h1v1h-1zM172 183h1v1h-1zM246 406h1v1h-1zM116 210h1v1h-1zM237 469h1v1h-1zM173 461h1v1h-1zM67 417h1v1h-1zM351 255h1v1h-1zM347 518h1v1h-1zM257 368h1v1h-1zM232 512h1v1h-1zM250 319h1v1h-1zM141 477h1v1h-1zM290 271h1v1h-1zM240 539h1v1h-1zM178 182h1v1h-1zM211 502h1v1h-1zM178 420h1v1h-1zM223 344h1v1h-1zM274 403h1v1h-1zM97 383h1v1h-1zM320 229h1v1h-1zM234 460h1v1h-1zM193 237h1v1h-1zM294 297h1v1h-1zM350 369h1v1h-1zM87 340h1v1h-1zM215 393h1v1h-1zM86 291h1v1h-1zM246 255h1v1h-1zM254 186h1v1h-1zM161 333h1v1h-1zM298 323h1v1h-1zM143 316h1v1h-1zM261 206h1v1h-1zM136 216h1v1h-1zM326 190h1v1h-1zM277 366h1v1h-1zM144 391h1v1h-1zM329 506h1v1h-1zM173 366h1v1h-1zM323 458h1v1h-1zM212 201h1v1h-1zM206 231h1v1h-1zM171 205h1v1h-1zM80 226h1v1h-1zM205 293h1v1h-1zM160 481h1v1h-1zM303 229h1v1h-1zM120 417h1v1h-1zM343 432h1v1h-1zM287 240h1v1h-1zM85 395h1v1h-1zM317 536h1v1h-1zM111 331h1v1h-1zM285 311h1v1h-1zM64 324h1v1h-1zM239 524h1v1h-1zM353 321h1v1h-1zM118 502h1v1h-1zM169 212h1v1h-1zM344 234h1v1h-1zM270 372h1v1h-1zM252 198h1v1h-1zM117 251h1v1h-1zM249 496h1v1h-1zM124 294h1v1h-1zM109 423h1v1h-1zM115 290h1v1h-1zM246 510h1v1h-1zM157 366h1v1h-1zM133 533h1v1h-1zM269 509h1v1h-1zM292 399h1v1h-1zM301 306h1v1h-1zM315 195h1v1h-1zM271 419h1v1h-1zM152 477h1v1h-1zM153 255h1v1h-1zM199 511h1v1h-1zM144 308h1v1h-1zM152 283h1v1h-1zM244 237h1v1h-1zM258 462h1v1h-1zM342 421h1v1h-1zM202 311h1v1h-1zM95 271h1v1h-1zM151 361h1v1h-1zM124 463h1v1h-1zM101 298h1v1h-1zM299 328h1v1h-1zM151 305h1v1h-1zM96 505h1v1h-1zM97 522h1v1h-1zM88 435h1v1h-1zM201 184h1v1h-1zM237 530h1v1h-1zM68 534h1v1h-1zM274 181h1v1h-1zM295 454h1v1h-1zM100 380h1v1h-1zM170 480h1v1h-1zM82 406h1v1h-1zM234 342h1v1h-1zM353 255h1v1h-1zM176 183h1v1h-1zM302 450h1v1h-1zM212 165h1v1h-1zM238 232h1v1h-1zM89 275h1v1h-1zM360 442h1v1h-1zM312 401h1v1h-1zM130 276h1v1h-1zM335 450h1v1h-1zM303 252h1v1h-1zM73 202h1v1h-1zM336 491h1v1h-1zM94 249h1v1h-1zM316 212h1v1h-1zM109 422h1v1h-1zM237 397h1v1h-1zM108 299h1v1h-1zM107 173h1v1h-1zM315 530h1v1h-1zM253 463h1v1h-1zM151 264h1v1h-1zM301 433h1v1h-1zM199 384h1v1h-1zM276 332h1v1h-1zM247 512h1v1h-1zM211 372h1v1h-1zM92 309h1v1h-1zM340 267h1v1h-1zM77 320h1v1h-1zM78 521h1v1h-1zM179 188h1v1h-1zM261 540h1v1h-1zM341 372h1v1h-1zM135 316h1v1h-1zM348 395h1v1h-1zM282 383h1v1h-1zM329 288h1v1h-1zM126 188h1v1h-1zM317 257h1v1h-1zM314 187h1v1h-1zM100 400h1v1h-1zM253 188h1v1h-1zM241 385h1v1h-1zM295 478h1v1h-1zM344 208h1v1h-1zM182 407h1v1h-1zM77 234h1v1h-1zM100 352h1v1h-1zM244 378h1v1h-1zM297 430h1v1h-1zM77 192h1v1h-1zM219 252h1v1h-1zM259 211h1v1h-1zM119 292h1v1h-1zM112 176h1v1h-1zM61 271h1v1h-1z"/><path fill="#464010" d="M72 286h1v1h-1zM335 266h1v1h-1zM122 526h1v1h-1zM291 272h1v1h-1zM73 360h1v1h-1zM349 198h1v1h-1zM178 214h1v1h-1zM120 198h1v1h-1zM291 237h1v1h-1zM293 467h1v1h-1zM74 462h1v1h-1zM84 512h1v1h-1zM71 217h1v1h-1zM155 345h1v1h-1zM232 393h1v1h-1zM98 174h1v1h-1zM109 425h1v1h-1zM202 410h1v1h-1zM229 317h1v1h-1zM78 204h1v1h-1zM327 462h1v1h-1zM316 242h1v1h-1zM151 507h1v1h-1zM108 526h1v1h-1zM320 458h1v1h-1zM238 535h1v1h-1zM207 388h1v1h-1zM69 323h1v1h-1zM105 206h1v1h-1zM310 522h1v1h-1zM213 195h1v1h-1zM298 290h1v1h-1zM70 475h1v1h-1zM96 485h1v1h-1zM305 202h1v1h-1zM338 201h1v1h-1zM301 222h1v1h-1zM271 274h1v1h-1zM171 314h1v1h-1zM94 397h1v1h-1zM73 302h1v1h-1zM86 271h1v1h-1zM267 221h1v1h-1zM302 245h1v1h-1zM180 227h1v1h-1zM241 532h1v1h-1zM92 343h1v1h-1zM208 199h1v1h-1zM351 261h1v1h-1zM316 283h1v1h-1zM293 218h1v1h-1zM340 193h1v1h-1zM188 326h1v1h-1zM252 180h1v1h-1zM161 239h1v1h-1zM212 202h1v1h-1zM244 211h1v1h-1zM156 290h1v1h-1zM265 479h1v1h-1zM264 514h1v1h-1zM166 278h1v1h-1zM118 329h1v1h-1zM264 425h1v1h-1zM184 506h1v1h-1zM156 313h1v1h-1zM317 364h1v1h-1zM216 187h1v1h-1zM285 417h1v1h-1zM99 377h1v1h-1zM201 409h1v1h-1zM324 259h1v1h-1zM297 339h1v1h-1zM182 224h1v1h-1zM234 505h1v1h-1zM200 198h1v1h-1zM353 389h1v1h-1zM328 351h1v1h-1zM298 194h1v1h-1zM298 275h1v1h-1zM330 414h1v1h-1zM144 376h1v1h-1zM125 261h1v1h-1zM284 214h1v1h-1zM348 380h1v1h-1zM75 513h1v1h-1zM358 394h1v1h-1zM296 394h1v1h-1zM331 395h1v1h-1zM351 240h1v1h-1zM292 176h1v1h-1zM190 497h1v1h-1zM326 224h1v1h-1zM329 489h1v1h-1zM83 194h1v1h-1zM77 385h1v1h-1zM67 315h1v1h-1zM332 469h1v1h-1zM272 507h1v1h-1zM113 384h1v1h-1zM60 199h1v1h-1zM309 331h1v1h-1zM90 365h1v1h-1zM349 215h1v1h-1zM333 314h1v1h-1zM277 327h1v1h-1zM221 263h1v1h-1zM288 522h1v1h-1zM339 455h1v1h-1zM199 176h1v1h-1zM231 259h1v1h-1zM154 300h1v1h-1zM126 475h1v1h-1zM217 411h1v1h-1zM259 426h1v1h-1zM180 284h1v1h-1zM158 446h1v1h-1zM119 175h1v1h-1zM306 377h1v1h-1zM82 429h1v1h-1zM88 346h1v1h-1zM233 211h1v1h-1zM176 394h1v1h-1zM259 352h1v1h-1zM224 418h1v1h-1zM89 534h1v1h-1zM334 535h1v1h-1zM221 310h1v1h-1zM210 355h1v1h-1zM205 397h1v1h-1zM197 478h1v1h-1zM285 212h1v1h-1zM346 442h1v1h-1zM86 484h1v1h-1zM134 517h1v1h-1zM213 522h1v1h-1zM117 412h1v1h-1zM304 483h1v1h-1zM326 213h1v1h-1zM99 197h1v1h-1zM84 166h1v1h-1zM200 362h1v1h-1zM207 486h1v1h-1zM147 341h1v1h-1zM256 369h1v1h-1zM81 389h1v1h-1zM209 308h1v1h-1zM184 176h1v1h-1zM194 413h1v1h-1zM66 345h1v1h-1zM87 337h1v1h-1zM124 378h1v1h-1zM138 502h1v1h-1zM111 365h1v1h-1zM351 297h1v1h-1zM182 529h1v1h-1zM342 418h1v1h-1zM306 447h1v1h-1zM84 338h1v1h-1zM66 239h1v1h-1zM289 298h1v1h-1zM159 231h1v1h-1zM106 335h1v1h-1zM70 272h1v1h-1zM200 430h1v1h-1zM284 202h1v1h-1zM272 330h1v1h-1zM310 337h1v1h-1zM134 238h1v1h-1zM142 468h1v1h-1zM190 257h1v1h-1zM121 321h1v1h-1zM227 390h1v1h-1zM345 240h1v1h-1zM304 274h1v1h-1zM233 252h1v1h-1zM68 426h1v1h-1zM290 172h1v1h-1zM108 406h1v1h-1zM68 174h1v1h-1zM128 475h1v1h-1zM264 484h1v1h-1zM248 347h1v1h-1zM224 528h1v1h-1zM90 473h1v1h-1zM280 395h1v1h-1zM162 514h1v1h-1zM239 373h1v1h-1zM94 307h1v1h-1zM220 264h1v1h-1zM144 277h1v1h-1zM245 187h1v1h-1zM197 290h1v1h-1zM359 395h1v1h-1zM356 365h1v1h-1zM136 300h1v1h-1zM181 430h1v1h-1zM337 413h1v1h-1zM70 213h1v1h-1zM291 495h1v1h-1zM317 507h1v1h-1zM229 471h1v1h-1zM320 318h1v1h-1zM178 391h1v1h-1zM197 396h1v1h-1zM154 222h1v1h-1zM209 269h1v1h-1zM285 427h1v1h-1zM175 360h1v1h-1zM249 469h1v1h-1zM267 264h1v1h-1zM185 513h1v1h-1zM179 280h1v1h-1zM262 417h1v1h-1zM297 477h1v1h-1zM151 376h1v1h-1zM119 540h1v1h-1zM163 393h1v1h-1zM75 469h1v1h-1zM135 457h1v1h-1zM259 478h1v1h-1zM73 263h1v1h-1zM62 246h1v1h-1zM66 451h1v1h-1zM356 341h1v1h-1zM176 336h1v1h-1zM146 195h1v1h-1zM224 507h1v1h-1zM164 438h1v1h-1zM347 239h1v1h-1zM99 533h1v1h-1zM253 342h1v1h-1zM200 391h1v1h-1zM118 401h1v1h-1zM184 530h1v1h-1zM354 372h1v1h-1z"/><path fill="#181808" d="M63 338h1v1h-1zM254 251h1v1h-1zM316 208h1v1h-1zM169 278h1v1h-1zM163 255h1v1h-1zM102 253h1v1h-1zM353 484h1v1h-1zM75 346h1v1h-1zM340 439h1v1h-1zM64 402h1v1h-1zM136 362h1v1h-1zM89 293h1v1h-1zM75 327h1v1h-1zM296 403h1v1h-1zM133 429h1v1h-1zM250 369h1v1h-1zM193 291h1v1h-1zM185 397h1v1h-1zM206 378h1v1h-1zM90 496h1v1h-1zM67 266h1v1h-1zM192 528h1v1h-1zM225 381h1v1h-1zM159 464h1v1h-1zM161 321h1v1h-1zM205 499h1v1h-1zM332 489h1v1h-1zM232 202h1v1h-1zM63 333h1v1h-1zM223 334h1v1h-1zM271 284h1v1h-1zM210 357h1v1h-1zM128 398h1v1h-1zM245 453h1v1h-1zM132 500h1v1h-1zM289 467h1v1h-1zM174 265h1v1h-1zM316 306h1v1h-1zM231 258h1v1h-1zM273 339h1v1h-1zM218 323h1v1h-1zM198 288h1v1h-1zM181 262h1v1h-1zM165 433h1v1h-1zM98 263h1v1h-1zM215 335h1v1h-1zM99 299h1v1h-1zM107 274h1v1h-1zM92 418h1v1h-1zM329 420h1v1h-1zM138 177h1v1h-1zM156 336h1v1h-1zM283 290h1v1h-1zM186 503h1v1h-1zM277 372h1v1h-1zM345 312h1v1h-1zM112 395h1v1h-1zM117 302h1v1h-1zM259 404h1v1h-1zM304 505h1v1h-1zM190 253h1v1h-1zM230 540h1v1h-1zM300 380h1v1h-1zM66 444h1v1h-1zM130 275h1v1h-1zM323 323h1v1h-1zM305 494h1v1h-1zM156 246h1v1h-1zM163 462h1v1h-1zM168 348h1v1h-1zM74 269h1v1h-1zM146 279h1v1h-1zM285 493h1v1h-1zM267 409h1v1h-1zM177 415h1v1h-1zM298 458h1v1h-1zM156 423h1v1h-1zM89 250h1v1h-1zM355 377h1v1h-1zM189 483h1v1h-1zM269 371h1v1h-1zM316 292h1v1h-1zM240 195h1v1h-1zM348 535h1v1h-1zM285 417h1v1h-1zM213 349h1v1h-1zM171 451h1v1h-1zM297 315h1v1h-1zM62 508h1v1h-1zM186 512h1v1h-1zM339 501h1v1h-1zM63 197h1v1h-1zM357 500h1v1h-1zM271 425h1v1h-1zM73 437h1v1h-1zM158 257h1v1h-1zM310 321h1v1h-1zM202 369h1v1h-1zM178 400h1v1h-1zM194 375h1v1h-1zM360 277h1v1h-1zM94 408h1v1h-1zM127 389h1v1h-1zM254 391h1v1h-1zM144 221h1v1h-1zM338 240h1v1h-1zM179 364h1v1h-1zM174 343h1v1h-1zM276 227h1v1h-1zM97 307h1v1h-1zM123 462h1v1h-1zM309 452h1v1h-1zM89 348h1v1h-1zM166 175h1v1h-1zM110 501h1v1h-1zM199 450h1v1h-1zM243 172h1v1h-1zM134 516h1v1h-1zM206 278h1v1h-1zM294 457h1v1h-1zM309 385h1v1h-1zM133 513h1v1h-1zM281 446h1v1h-1zM217 176h1v1h-1zM164 296h1v1h-1zM126 271h1v1h-1zM176 485h1v1h-1zM346 199h1v1h-1zM238 330h1v1h-1zM158 294h1v1h-1zM151 466h1v1h-1zM233 473h1v1h-1zM135 357h1v1h-1zM237 332h1v1h-1zM344 529h1v1h-1zM351 400h1v1h-1zM270 355h1v1h-1zM219 465h1v1h-1zM253 275h1v1h-1zM173 338h1v1h-1zM252 428h1v1h-1zM86 361h1v1h-1zM136 369h1v1h-1zM248 310h1v1h-1zM81 464h1v1h-1zM105 183h1v1h-1zM197 314h1v1h-1zM304 249h1v1h-1zM354 337h1v1h-1zM303 180h1v1h-1zM247 199h1v1h-1zM355 185h1v1h-1zM280 329h1v1h-1zM61 319h1v1h-1zM194 196h1v1h-1zM335 287h1v1h-1zM353 200h1v1h-1zM253 462h1v1h-1zM185 240h1v1h-1zM99 470h1v1h-1zM87 226h1v1h-1zM166 535h1v1h-1zM126 242h1v1h-1zM130 264h1v1h-1zM279 315h1v1h-1zM215 239h1v1h-1zM178 248h1v1h-1zM166 234h1v1h-1zM91 362h1v1h-1zM168 349h1v1h-1zM325 410h1v1h-1zM244 512h1v1h-1zM226 218h1v1h-1zM201 347h1v1h-1zM219 383h1v1h-1zM222 294h1v1h-1zM178 440h1v1h-1zM162 443h1v1h-1zM128 203h1v1h-1zM186 196h1v1h-1zM219 506h1v1h-1zM326 427h1v1h-1zM83 499h1v1h-1zM297 384h1v1h-1zM295 219h1v1h-1zM228 249h1v1h-1zM248 332h1v1h-1zM279 374h1v1h-1zM172 257h1v1h-1zM181 340h1v1h-1zM87 414h1v1h-1zM253 423h1v1h-1zM206 503h1v1h-1zM225 252h1v1h-1zM213 420h1v1h-1zM63 382h1v1h-1zM328 238h1v1h-1zM159 319h1v1h-1zM110 295h1v1h-1zM101 293h1v1h-1zM305 406h1v1h-1zM158 439h1v1h-1zM306 530h1v1h-1zM100 427h1v1h-1zM197 310h1v1h-1zM169 420h1v1h-1zM72 251h1v1h-1zM80 215h1v1h-1zM263 423h1v1h-1zM333 489h1v1h-1zM178 518h1v1h-1zM334 240h1v1h-1zM81 293h1v1h-1zM107 537h1v1h-1zM171 375h1v1h-1zM109 226h1v1h-1zM316 373h1v1h-1zM160 465h1v1h-1zM90 229h1v1h-1zM345 243h1v1h-1zM202 462h1v1h-1zM286 171h1v1h-1zM81 254h1v1h-1zM335 318h1v1h-1zM102 354h1v1h-1zM335 271h1v1h-1zM285 491h1v1h-1zM225 322h1v1h-1zM147 461h1v1h-1zM283 169h1v1h-1z"/></g>
<ellipse cx="262" cy="249" rx="61" ry="64" fill="url(#glow)" filter="url(#blur)"/><g clip-path="url(#cglow)"><rect x="200" y="185" width="125" height="130" fill="#fff" filter="url(#gmot)" opacity="0.45"/></g><ellipse cx="262" cy="249" rx="61" ry="64" fill="url(#glowrim)" filter="url(#blur)"/>
<circle cx="300" cy="228" r="54.5" fill="url(#bigR)"/><circle cx="300" cy="228" r="54.5" fill="url(#rdark)"/>
<circle cx="300" cy="228" r="54.5" fill="url(#bigY)" mask="url(#mk)"/><circle cx="300" cy="228" r="54.5" fill="url(#rim)"/>
<circle cx="282" cy="328" r="26" fill="url(#grn)"/>
<g clip-path="url(#cg)"><ellipse cx="276" cy="318" rx="18" ry="13" fill="#302800" opacity="0.55" filter="url(#blur1)"/><path d="M266 306Q276 302 290 307Q288 314 282 316Q274 312 266 312z" fill="#000" opacity="0.6" filter="url(#blur1)"/>
<rect x="270" y="300" width="40" height="48" fill="#fff" filter="url(#gm)" mask="url(#gmask)"/></g>
<circle cx="282" cy="328" r="26" fill="url(#gshade)"/>
<circle cx="132" cy="335" r="14.4" fill="url(#org)"/>
<circle cx="122.5" cy="449" r="19.5" fill="url(#yel)"/>
</g>
<line x1="125" y1="445" x2="302" y2="221" stroke="#fff" stroke-width="1" style="mix-blend-mode:difference"/>
<circle cx="302" cy="221" r="4" fill="none" stroke="#2040ff" stroke-width="1"/>
<circle cx="239" cy="247" r="4.5" fill="none" stroke="#2020e0" stroke-width="1.3"/>
<path d="M239 240v3M239 251v3M232 247h3M243 247h3" stroke="#2020e0" stroke-width="1.2"/>
<text x="244" y="258" font-size="10" fill="#2020e0" font-family="Liberation Sans">2</text>
<circle cx="299" cy="315" r="4" fill="none" stroke="#a070f0" stroke-width="1.2"/>
<text x="304" y="324" font-size="8" fill="#a070f0" font-family="Liberation Sans">1</text>
<path d="M117 447h10M122 442v10" stroke="#6060ff" stroke-width="1.2"/>
<text x="127" y="457" font-size="8" fill="#e0e0ff" font-family="Liberation Sans">1</text>
</svg>



<!-- ===== INFO ===== -->
<div class="a" style="left:369px;top:116px;width:202px;height:298px;background:#c0c0c0;box-shadow:inset 1px 1px #dfdfdf,inset 2px 2px #fff,inset -1px -1px #000,inset -2px -2px #808080"></div>
<div class="a tb" style="left:373px;top:119px;width:195px;height:15px"></div>
<div class="t" style="left:376px;top:121px;color:#fff;font-size:11px">Info</div>
<div class="cap" style="left:541px;top:120px;width:12px;height:12px"></div>
<svg style="left:544px;top:123px" width="7" height="5"><path d="M3.5 0L7 4H0z" fill="#000"/></svg>
<div class="cap" style="left:555px;top:120px;width:12px;height:12px"></div>
<svg style="left:558px;top:123px" width="6" height="6"><path d="M0.5 0.5L5.5 5.5M5.5 0.5L0.5 5.5" stroke="#000" stroke-width="1.4"/></svg>
<div class="a" style="left:375px;top:136px;width:96px;height:31px;box-shadow:inset 1px 1px #808080,inset -1px -1px #fff;background:#c0c0c0"></div>
<div class="a" style="left:472px;top:136px;width:97px;height:31px;box-shadow:inset 1px 1px #808080,inset -1px -1px #fff;background:#c0c0c0"></div>
<div class="a" style="left:375px;top:169px;width:96px;height:32px;box-shadow:inset 1px 1px #808080,inset -1px -1px #fff;background:#c0c0c0"></div>
<div class="a" style="left:472px;top:169px;width:97px;height:129px;box-shadow:inset 1px 1px #808080,inset -1px -1px #fff;background:#c0c0c0"></div>
<div class="a" style="left:375px;top:203px;width:96px;height:95px;box-shadow:inset 1px 1px #808080,inset -1px -1px #fff;background:#c0c0c0"></div>
<div class="a" style="left:375px;top:307px;width:96px;height:104px;box-shadow:inset 1px 1px #808080,inset -1px -1px #fff;background:#c0c0c0"></div>
<div class="a" style="left:472px;top:307px;width:97px;height:104px;box-shadow:inset 1px 1px #808080,inset -1px -1px #fff;background:#c0c0c0"></div>

<div class="t" style="left:380px;top:141px">X: 58,59</div>
<div class="t" style="left:380px;top:155px">Y: 37,25</div>
<div class="t" style="left:380px;top:174px">W:</div>
<div class="t" style="left:380px;top:188px">H:</div>
<div class="t" style="left:380px;top:241px">R:&nbsp; 237</div>
<div class="t" style="left:380px;top:255px">G:&nbsp; 226</div>
<div class="t" style="left:380px;top:269px">B:&nbsp; 176</div>
<div class="t" style="left:508px;top:181px">:</div><div class="t" style="left:517px;top:181px">-128.38</div>
<div class="t" style="left:480px;top:210px">Distance:</div>
<div class="t" style="left:489px;top:241px">1:&nbsp; 97.64</div>
<div class="t" style="left:380px;top:317px">#1</div>
<div class="t" style="left:478px;top:317px">#2</div>
<div class="t" style="left:380px;top:353px">C:&nbsp; 28270</div>
<div class="t" style="left:380px;top:367px">M:&nbsp; 17733</div>
<div class="t" style="left:380px;top:381px">Y:&nbsp; 27242</div>
<div class="t" style="left:380px;top:395px">K:&nbsp; 257</div>
<div class="t" style="left:478px;top:353px">H:&nbsp; 29</div>
<div class="t" style="left:478px;top:367px">S:&nbsp; 153</div>
<div class="t" style="left:478px;top:381px">L:&nbsp; 215</div>

<svg style="left:479px;top:145px" width="16" height="16"><path d="M4.5 0.5L8 4L4.5 7.5L1 4z" fill="none" stroke="#0000c0" stroke-width="1"/><use href="#drop" x="0" y="0" width="16" height="16"/></svg>
<svg style="left:500px;top:147px" width="12" height="7"><use href="#eye" width="12" height="7"/></svg>
<svg style="left:521px;top:145px" width="15" height="14"><use href="#ruler" width="15" height="14"/></svg>
<svg style="left:542px;top:147px" width="12" height="7"><use href="#eye" width="12" height="7"/></svg>
<svg style="left:479px;top:178px" width="21" height="21" viewBox="0 0 21 21"><path d="M13 1L3 12L20 12" fill="none" stroke="#000" stroke-width="3.4" stroke-linejoin="round"/><path d="M13 1L3 12L20 12" fill="none" stroke="#ffff00" stroke-width="2"/><path d="M3 4Q14 6 11 19" fill="none" stroke="#e00000" stroke-width="2.2"/></svg>
<svg style="left:531px;top:202px" width="21" height="22" viewBox="0 0 15 14" preserveAspectRatio="none"><use href="#ruler" width="15" height="14"/></svg>
<svg style="left:428px;top:214px" width="16" height="16"><use href="#drop" width="16" height="16"/></svg>
<svg style="left:424px;top:315px" width="20" height="20"><use href="#tgt" width="20" height="20"/></svg>
<svg style="left:521px;top:315px" width="20" height="20"><use href="#tgt" width="20" height="20"/></svg>
<!-- swatches -->
<div class="a" style="left:451px;top:208px;width:15px;height:19px;background:#ede2b0;box-shadow:inset 1px 1px #000,inset -1px -1px #fff"></div>
<div class="a" style="left:451px;top:313px;width:15px;height:18px;background:#4a8a5a;box-shadow:inset 1px 1px #000,inset -1px -1px #fff"></div>
<div class="a" style="left:549px;top:313px;width:15px;height:18px;background:#ede2b0;box-shadow:inset 1px 1px #000,inset -1px -1px #fff"></div>

<!-- ===== OBJECT PROPERTIES ===== -->
<div class="a" style="left:33px;top:543px;width:462px;height:239px;background:#c0c0c0;box-shadow:inset 1px 1px #dfdfdf,inset 2px 2px #fff,inset -1px -1px #000,inset -2px -2px #808080"></div>
<div class="a tb" style="left:36px;top:546px;width:456px;height:15px"></div>
<div class="t" style="left:38px;top:548px;color:#fff;font-size:11px">Object Properties</div>
<div class="t" style="left:40px;top:575px;font-size:11px">Name:</div>
<div class="a" style="left:86px;top:568px;width:251px;height:23px;background:#fff;box-shadow:inset 1px 1px #808080,inset -1px -1px #fff,inset 2px 2px #000,inset -2px -2px #dfdfdf"></div>
<div class="t" style="left:95px;top:573px;font-size:11px">żółć</div>
<div class="btn a" style="left:357px;top:568px;width:17px;height:20px"></div>
<div class="btn a" style="left:374px;top:568px;width:17px;height:20px"></div>
<svg style="left:363px;top:574px" width="5" height="8"><path d="M4 0v8L0 4z" fill="#000"/></svg>
<svg style="left:381px;top:574px" width="5" height="8"><path d="M0 0v8L4 4z" fill="#000"/></svg>
<div class="a" style="left:409px;top:567px;width:71px;height:73px;background:#fff;box-shadow:inset 1px 1px #808080,inset -1px -1px #fff,inset 2px 2px #000,inset -2px -2px #dfdfdf"></div>
<div class="t" style="left:413px;top:586px;font-size:33px;font-weight:bold;color:#ffff00;letter-spacing:-0.5px;transform:scaleY(0.9);transform-origin:0 100%">żółć</div>
<!-- list -->
<div class="a" style="left:42px;top:602px;width:352px;height:168px;background:#fff;box-shadow:inset 1px 1px #808080,inset -1px -1px #fff,inset 2px 2px #000,inset -2px -2px #dfdfdf"></div>
<div class="a" style="left:44px;top:604px;width:173px;height:17px;background:#c0c0c0;box-shadow:inset 1px 1px #fff,inset -1px -1px #808080,inset -2px -2px #a0a0a0"></div>
<div class="a" style="left:217px;top:604px;width:175px;height:17px;background:#c0c0c0;box-shadow:inset 1px 1px #fff,inset -1px -1px #808080,inset -2px -2px #a0a0a0"></div>
<div class="t" style="left:49px;top:607px;font-size:11px">Name</div>
<div class="t" style="left:222px;top:607px;font-size:11px">Value</div>
<div class="t" style="left:47px;top:624px;font-size:11px">ALTTEXT</div>
<div class="t" style="left:47px;top:639px;font-size:11px">Kolor</div>
<div class="t" style="left:47px;top:654px;font-size:11px">URL</div>
<div class="t" style="left:222px;top:624px;font-size:11px">Witryna Micrografx</div>
<div class="t" style="left:222px;top:639px;font-size:11px">żółty</div>
<div class="t" style="left:222px;top:654px;font-size:11px">http://www.micrografx.com/pol...</div>
<div class="btn a" style="left:406px;top:678px;width:76px;height:25px"></div>
<div class="btn a" style="left:406px;top:709px;width:76px;height:25px"></div>
<div class="t" style="left:434px;top:685px;font-size:11px;color:#808080;text-shadow:1px 1px #fff">Edit</div>
<div class="t" style="left:425px;top:716px;font-size:11px;color:#808080;text-shadow:1px 1px #fff">Delete</div>

<!-- ===== QUICKZOOM ===== -->
<div class="a" style="left:450px;top:414px;width:120px;height:165px;background:#c0c0c0;box-shadow:inset 1px 1px #dfdfdf,inset 2px 2px #fff,inset -1px -1px #000,inset -2px -2px #808080"></div>
<div class="a tb" style="left:453px;top:417px;width:114px;height:15px"></div>
<div class="t" style="left:455px;top:419px;color:#fff;font-size:11px">QuickZoom</div>
<div class="cap" style="left:553px;top:419px;width:11px;height:11px"></div>
<svg style="left:556px;top:422px" width="6" height="5"><path d="M0.5 0.5L5.5 4.5M5.5 0.5L0.5 4.5" stroke="#000" stroke-width="1.4"/></svg>
<div class="a" style="left:453px;top:432px;width:113px;height:143px;background:#fff"></div>
<svg style="left:456px;top:435px" width="107" height="137" viewBox="0 0 107 137"><rect width="107" height="137" fill="#000"/><use href="#scene" transform="scale(0.357) translate(-60,-165)"/>
<defs><filter id="motq" x="0" y="0" width="1" height="1" color-interpolation-filters="sRGB"><feTurbulence type="fractalNoise" baseFrequency="0.5" numOctaves="2" seed="7" result="n"/><feColorMatrix in="n" type="matrix" values="1 0 0 0 0  1 0 0 0 0  1 0 0 0 0  0 0 0 0 1" result="n2"/><feComposite in="SourceGraphic" in2="n2" operator="arithmetic" k1="0" k2="1" k3="1" k4="-0.9" result="sum"/><feColorMatrix in="sum" type="matrix" values="0 0 0 0 1  0 0 0 0 1  0 0 0 0 1  10 0 0 0 -0.3"/></filter>
<mask id="mkq" maskUnits="userSpaceOnUse" x="60" y="0" width="50" height="50"><rect x="66" y="2" width="40" height="40" fill="url(#mgrad)" filter="url(#motq)"/></mask></defs>
<circle cx="86.5" cy="22" r="20" fill="url(#bigR)"/><circle cx="86.5" cy="22" r="20" fill="url(#rdark)"/><circle cx="86.5" cy="22" r="20" fill="url(#bigY)" mask="url(#mkq)"/><circle cx="86.5" cy="22" r="20" fill="url(#rim)"/>
</svg>


</body></html>
